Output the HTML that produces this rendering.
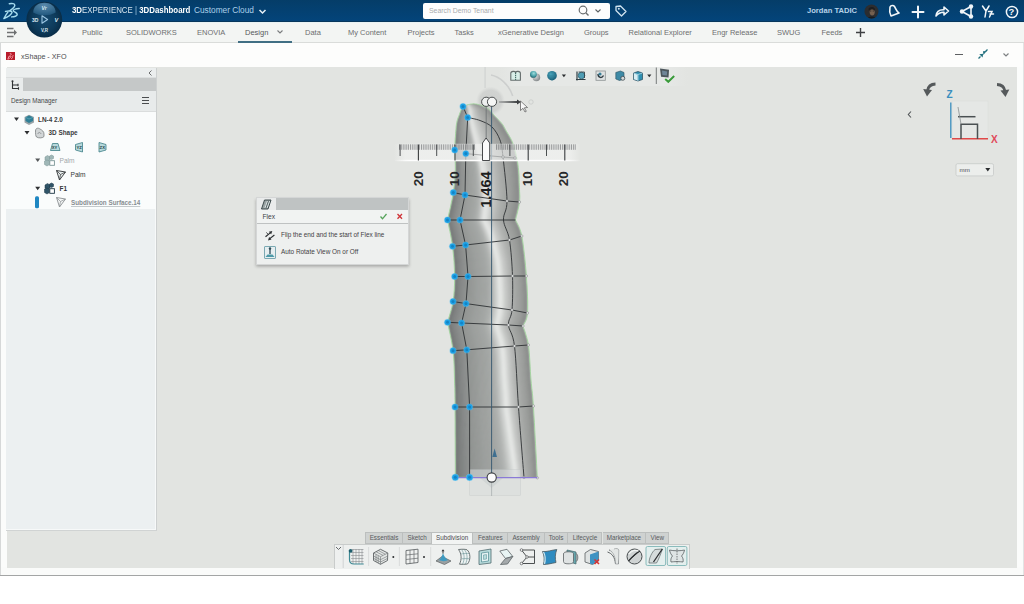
<!DOCTYPE html>
<html><head><meta charset="utf-8">
<style>
*{box-sizing:border-box;margin:0;padding:0}
html,body{width:1024px;height:604px;overflow:hidden;background:#fff;font-family:"Liberation Sans",sans-serif}
.a{position:absolute}
#top{left:0;top:0;width:1024px;height:22px;background:linear-gradient(#053d68,#03447a);border-bottom:1px solid #07375c}
#tabs{left:0;top:22px;width:1024px;height:21px;background:#f3f5f3;border-bottom:1px solid #dadcda;border-top:1px solid #e9f2f3}
.tab{position:absolute;top:27.5px;font-size:7.5px;color:#6d6f70;white-space:nowrap}
#title{left:1px;top:43px;width:1022px;height:24px;background:#fdfdfc}
#frameL{left:0;top:43px;width:1px;height:533px;background:#d6d8d8}
#frameR{left:1023px;top:43px;width:1px;height:533px;background:#e2e4e4}
#frameB{left:0;top:575px;width:1024px;height:1px;background:#a3a5a5}
#strip{left:1px;top:567px;width:1022px;height:8px;background:#fafbfa}
#view{left:7px;top:67px;width:1009.5px;height:501px;background:#e2e4e1}
#framebg{left:1px;top:43px;width:1022px;height:532px;background:#fbfcfb}
#panel{left:6px;top:68px;width:150.5px;height:462.5px;background:#ecf0f1;border-right:1px solid #cdd0d0;border-bottom:1px solid #d0d3d3;box-shadow:inset -1px -1px 0 #f7f9f9}
.tr{position:absolute;font-size:6.3px;color:#3a3c3d;white-space:nowrap}
</style></head><body>
<!-- top bar -->
<div id="top" class="a"></div>
<div id="tabs" class="a"></div>
<div id="framebg" class="a"></div>
<div id="title" class="a"></div>
<div id="frameL" class="a"></div>
<div id="frameR" class="a"></div>
<div id="frameB" class="a"></div>
<div id="strip" class="a"></div>
<div id="view" class="a"></div>
<div id="panel" class="a"></div>
<div class="a" style="left:498px;top:67px;width:190px;height:19px;background:linear-gradient(90deg,rgba(236,238,236,0),#e6e8e6 10%,#e6e8e6 88%,rgba(236,238,236,0))"></div>
<!-- top bar content -->
<svg class="a" style="left:2px;top:1px" width="20" height="20" viewBox="2 1 20 20">
 <g fill="none" stroke="#a6dbee" stroke-width="1.45" stroke-linecap="round" stroke-linejoin="round">
  <path d="M9.3 3.7 C12 3.2 14.8 3.5 14.8 5.2 C14.8 7 12.2 9 10 10.6"/>
  <path d="M5.5 11.4 C8 10.9 12.6 10.6 12 12.6 C11.2 14.8 7.6 17.2 3.9 18.5 C5.2 16 6.6 13.6 8.2 11.6"/>
  <path d="M19.2 8.5 C16.6 8.7 13.1 9.2 13.3 10.6 C13.5 11.9 17 12.7 17.2 14.3 C17.4 16 14.2 16.8 11.6 16.9"/>
 </g>
</svg>
<svg class="a" style="left:25px;top:0px" width="40" height="40" viewBox="0 0 40 40">
 <defs>
  <radialGradient id="cg" cx="50%" cy="50%" r="52%"><stop offset="0" stop-color="#164b70"/><stop offset="0.65" stop-color="#0d3a5a"/><stop offset="1" stop-color="#082b45"/></radialGradient>
  <radialGradient id="cap" cx="50%" cy="20%" r="75%"><stop offset="0" stop-color="#6c9fc2"/><stop offset="1" stop-color="#2a6289"/></radialGradient>
 </defs>
 <circle cx="19.3" cy="19.6" r="17.9" fill="url(#cg)"/>
 <path d="M8.2 12.5 C8.2 6 13.5 2.8 19.4 2.8 C25.3 2.8 30.6 6 30.6 12.5 C27 14.6 23 15.2 19.4 15.2 C15.8 15.2 11.8 14.6 8.2 12.5Z" fill="url(#cap)" opacity="0.8"/>
 <path d="M17 15.8 L17 23.2 L22.6 19.5Z" fill="none" stroke="#9cc6e2" stroke-width="1.1" stroke-linejoin="round"/>
 <text x="7" y="21.5" font-size="5" font-weight="bold" fill="#dce9f2" font-family="Liberation Sans">3D</text>
 <text x="29.5" y="22" font-size="5.5" font-style="italic" font-weight="bold" fill="#dce9f2" font-family="Liberation Sans">V</text>
 <text x="16" y="32" font-size="4.5" font-weight="bold" fill="#dce9f2" font-family="Liberation Sans">V,R</text>
 <text x="16.5" y="9.5" font-size="5" font-style="italic" font-weight="bold" fill="#dce9f2" font-family="Liberation Sans">Vr</text>
</svg>
<div class="a" style="left:72px;top:4.6px;font-size:9px;color:#fff;white-space:nowrap;transform:scaleX(0.874);transform-origin:0 0"><b>3D</b><span style="color:#d6e4ee">EXPERIENCE</span> <span style="color:#9cc4e0">|</span> <b>3DDashboard</b></div>
<div class="a" style="left:194px;top:5.4px;font-size:8.3px;color:#acd0ea;white-space:nowrap">Customer Cloud</div>
<svg class="a" style="left:258px;top:8px" width="9" height="7" viewBox="0 0 9 7"><path d="M1.5 2 L4.5 5 L7.5 2" fill="none" stroke="#e8f0f6" stroke-width="1.5"/></svg>
<div class="a" style="left:423px;top:3px;width:187px;height:16px;background:#fdfdfd;border-radius:2px"></div>
<div class="a" style="left:429px;top:6.5px;font-size:6.9px;color:#a8abad;white-space:nowrap">Search Demo Tenant</div>
<svg class="a" style="left:577px;top:4px" width="30" height="14" viewBox="0 0 30 14">
 <circle cx="6" cy="6" r="3.8" fill="none" stroke="#6a6e70" stroke-width="1.2"/><path d="M8.8 8.8 L11.5 11.5" stroke="#6a6e70" stroke-width="1.4"/>
 <path d="M18.5 5.5 L21 8 L23.5 5.5" fill="none" stroke="#5d6163" stroke-width="1.1"/>
</svg>
<svg class="a" style="left:614px;top:4px" width="14" height="14" viewBox="0 0 14 14"><path d="M2 2.5 L6.5 2 L12 7.5 L7.5 12 L2 6.5Z" fill="none" stroke="#cfe2ef" stroke-width="1.3" stroke-linejoin="round"/><circle cx="4.8" cy="4.8" r="1" fill="#cfe2ef"/></svg>
<div class="a" style="left:807px;top:6px;font-size:7.6px;font-weight:bold;color:#b6d2e8;white-space:nowrap">Jordan TADIC</div>
<svg class="a" style="left:863.5px;top:3.5px" width="15" height="15" viewBox="0 0 15 15"><defs><clipPath id="av"><circle cx="7.5" cy="7.5" r="7"/></clipPath></defs><circle cx="7.5" cy="7.5" r="7" fill="#2b2d30"/><g clip-path="url(#av)"><ellipse cx="8.2" cy="7.8" rx="2.6" ry="3.6" fill="#75604f"/><path d="M4.5 5 C5 2.5 10 2 11 5 L11 7 C10 5 6 5 5 7Z" fill="#1d1e20"/><path d="M3 15 C3.5 11.5 12 11.5 12.5 15Z" fill="#1a1b1d"/><path d="M5.8 7 H7.3 M8.7 7 H10.2" stroke="#1d1e20" stroke-width="0.7"/></g></svg>
<svg class="a" style="left:885px;top:1.5px" width="135" height="18" viewBox="0 0 135 18">
 <g fill="none" stroke="#f2f6f9" stroke-width="1.6" stroke-linejoin="round" stroke-linecap="round">
  <path d="M5 5 C4 10 5 12 6 14 L14 11 C11.5 9.5 11 7 9.5 4.5 C8.5 3 6 3 5 5Z"/>
  <path d="M33 4.5 L33 15.5 M27.5 10 L38.5 10" stroke-width="2"/>
  <path d="M51 14 C51.5 9.5 54.5 7.5 59 7.8 L59 5 L63.5 9 L59 13 L59 10.2 C55.5 10 53 11.5 51 14Z"/>
  <path d="M86 4.5 L77 9.5 L86 14.5 Z"/>
 </g>
 <g fill="#f2f6f9"><circle cx="86" cy="4.5" r="2.2"/><circle cx="77" cy="9.5" r="2.2"/><circle cx="86" cy="14.5" r="2.2"/></g>
 <g fill="none" stroke="#f2f6f9" stroke-width="1.5" stroke-linecap="round">
  <path d="M97.5 4 L101 9 L104 4 M101 9 L100 15 M103.5 9.5 L107 9.5 L104.5 15 M105 12 L108.5 12"/>
  <circle cx="127" cy="10" r="5.6"/>
 </g>
 <text x="123.6" y="13.4" font-size="9.5" font-weight="bold" fill="#f2f6f9" font-family="Liberation Sans">?</text>
</svg>

<!-- title bar -->
<div class="a" style="left:6.2px;top:51.7px;width:9px;height:8.2px;background:#b81c2b"></div>
<svg class="a" style="left:6.2px;top:51.7px" width="9" height="8.2" viewBox="0 0 9 8.2"><path d="M3.8 1.5 C5 1.3 5.8 1.8 4.8 3 L3.5 4 M2.5 4.5 C4 4.2 5 4.3 4.5 5.3 C4 6.3 3 6.8 1.8 7.2 L2.8 4.8 M7.6 3.8 C6.5 3.7 5.6 4.2 6.2 5 C6.8 5.6 6.6 6.5 5 6.8" fill="none" stroke="#f39aa2" stroke-width="1"/></svg>
<div class="a" style="left:21px;top:51.5px;font-size:7.2px;color:#4a4c4e;white-space:nowrap">xShape - XFO</div>
<div class="a" style="left:955px;top:53.5px;width:8px;height:1.5px;background:#5d5f61"></div>
<svg class="a" style="left:976px;top:48px" width="14" height="13" viewBox="976 48 14 13"><g stroke="#23707e" stroke-width="1.3"><path d="M978.5 58.5 L980.5 56.5"/><path d="M987.5 49.5 L985.5 51.5"/></g><path d="M979.3 54.3 L983.2 53.7 L982.6 57.6Z" fill="#23707e"/><path d="M986.7 50.9 L983 51.3 L983.4 55Z" fill="#23707e"/></svg>
<svg class="a" style="left:1002px;top:52px" width="8" height="6" viewBox="0 0 8 6"><path d="M1.5 1.5 L4 4 L6.5 1.5" fill="none" stroke="#7d8082" stroke-width="1.2"/></svg>
<!-- panel -->
<div class="a" style="left:6px;top:68px;width:150px;height:10px;background:#ebeeee;border-bottom:1px solid #dcdfdf"></div>
<svg class="a" style="left:147px;top:69px" width="7" height="8" viewBox="0 0 7 8"><path d="M4.5 1.5 L2 4 L4.5 6.5" fill="none" stroke="#6d6f70" stroke-width="1"/></svg>
<div class="a" style="left:6px;top:78px;width:150px;height:13px;background:#c5c8c8"></div>
<div class="a" style="left:6px;top:78px;width:17px;height:13px;background:#e9ecec"></div>
<svg class="a" style="left:10px;top:80px" width="11" height="10" viewBox="0 0 11 10"><g fill="none" stroke="#2f3133" stroke-width="1.1"><path d="M2.5 1.5 V8.5 H8.5 M2.5 5 H8"/><path d="M8 3.8 V6.2 M8.5 7.3 V9.7"/></g><circle cx="2.5" cy="1.3" r="1" fill="#2f3133"/></svg>
<div class="a" style="left:6px;top:91px;width:150px;height:21px;background:#e8ebeb;border-bottom:1px solid #dadddd"></div>
<div class="a" style="left:11px;top:97px;font-size:6.3px;color:#45474a;white-space:nowrap">Design Manager</div>
<svg class="a" style="left:141px;top:96px" width="9" height="9" viewBox="0 0 9 9"><path d="M1 1.5 H8 M1 4.5 H8 M1 7.5 H8" stroke="#4a4c4e" stroke-width="1"/></svg>
<div class="a" style="left:6px;top:112px;width:149.5px;height:96.5px;background:#fafcfc"></div>

<!-- tree -->
<svg class="a" style="left:6px;top:112px" width="150" height="98" viewBox="6 112 150 98">
 <g fill="#2d2f31">
  <path d="M14 117.5 L19 117.5 L16.5 121Z"/>
  <path d="M24.5 131 L29.5 131 L27 134.5Z"/>
  <path d="M35.2 158.5 L40.2 158.5 L37.7 162Z" fill="#55585a"/>
  <path d="M35.2 186.7 L40.2 186.7 L37.7 190.2Z"/>
 </g>
 <!-- cube LN-4 -->
 <path d="M24.5 117 L29 114.8 L34 117 L34 122.5 L29 125 L24.5 122.5Z" fill="#9aa4a8"/>
 <path d="M25.5 117.3 L29 115.6 L33 117.3 L33 121 L29 123 L25.5 121Z" fill="#2f7f95"/>
 <path d="M25.5 117.3 L29 119 L33 117.3" fill="none" stroke="#6fb4c6" stroke-width="0.6"/>
 <!-- 3D shape icon -->
 <path d="M35.5 131 C35.5 128 38 127.5 40 129 C42 130 44 131.5 44 134 L44 136.5 C43 138 39 138.5 36.5 137 C35.5 136 35.5 133 35.5 131Z" fill="#d2d6d7" stroke="#6d7173" stroke-width="0.7"/>
 <path d="M38 134 C38 132 40.5 132 41 134" fill="none" stroke="#6d7173" stroke-width="0.6"/>
 <!-- planes -->
 <path d="M50.5 150.5 L52.5 143.5 L58 143.5 L60 150.5Z" fill="#b7d9dc" stroke="#3d7f87" stroke-width="0.8"/>
 <text x="51.8" y="149" font-size="4.2" font-weight="bold" fill="#1e3f44" font-family="Liberation Sans">XY</text>
 <path d="M75.5 144.5 L82.5 142.5 L82.5 152 L75.5 150Z" fill="#b7d9dc" stroke="#3d7f87" stroke-width="0.8"/>
 <text x="76.5" y="149" font-size="4.2" font-weight="bold" fill="#1e3f44" font-family="Liberation Sans">YZ</text>
 <path d="M99 142.5 L106 144.5 L106 150 L99 152Z" fill="#b7d9dc" stroke="#3d7f87" stroke-width="0.8"/>
 <text x="99.6" y="149" font-size="4.2" font-weight="bold" fill="#1e3f44" font-family="Liberation Sans">ZX</text>
 <!-- Palm geometrical set (greyed) -->
 <g fill="#9fb7b7" stroke="#7a9595" stroke-width="0.5">
  <path d="M45 157.0 L47.5 155.5 L50 157.0 L50 160.0 L47.5 161.5 L45 160.0Z"/>
  <path d="M49.5 156.0 L51.5 155.0 L53.5 156.0 L53.5 158.5 L51.5 159.5 L49.5 158.5Z"/>
  <path d="M44.5 161.0 L47 160.0 L49.5 161.0 L49.5 164.5 L47 166.0 L44.5 164.5Z"/>
 </g>
 <rect x="49.8" y="160.7" width="4.6" height="4.6" fill="#ffffff" stroke="#7a9595" stroke-width="0.9"/>
  <!-- palm surface icon -->
 <g fill="#e6ecec" stroke="#2f3234" stroke-width="0.9" stroke-linejoin="round"><path d="M56.5 170.5 L65.5 172 L59.5 180 Z"/></g><g fill="none" stroke="#2f3234" stroke-width="0.7"><path d="M56.5 170.5 L60.5 174.5 L65.5 172 M60.5 174.5 L59.5 180"/></g>
 <!-- F1 set -->
 <g fill="#2f5468" stroke="#1d3644" stroke-width="0.5">
  <path d="M45 185.0 L47.5 183.5 L50 185.0 L50 188.0 L47.5 189.5 L45 188.0Z"/>
  <path d="M49.5 184.0 L51.5 183.0 L53.5 184.0 L53.5 186.5 L51.5 187.5 L49.5 186.5Z"/>
  <path d="M44.5 189.0 L47 188.0 L49.5 189.0 L49.5 192.5 L47 194.0 L44.5 192.5Z"/>
 </g>
 <rect x="49.8" y="188.7" width="4.6" height="4.6" fill="#ffffff" stroke="#1d3644" stroke-width="0.9"/>
  <!-- subdivision surface icon -->
 <g fill="#f4f6f6" stroke="#8a8f92" stroke-width="0.9" stroke-linejoin="round"><path d="M56.5 197.5 L65.5 199 L59.5 207 Z"/></g><g fill="none" stroke="#8a8f92" stroke-width="0.7"><path d="M56.5 197.5 L60.5 201.5 L65.5 199 M60.5 201.5 L59.5 207"/></g>
 <rect x="35" y="196.3" width="4" height="12" rx="1.5" fill="#1f87c2"/>
</svg>
<div class="tr" style="left:38px;top:115.5px;font-size:6.4px;font-weight:bold;color:#3b3d3f">LN-4 2.0</div>
<div class="tr" style="left:48.5px;top:129px;font-size:6.4px;font-weight:bold;color:#3b3d3f">3D Shape</div>
<div class="tr" style="left:59.5px;top:156.5px;font-size:6.6px;color:#a3a7aa">Palm</div>
<div class="tr" style="left:70.5px;top:170.5px;font-size:6.6px;color:#333537">Palm</div>
<div class="tr" style="left:59.5px;top:184.5px;font-size:6.4px;font-weight:bold;color:#333537">F1</div>
<div class="tr" style="left:71px;top:198.6px;font-size:6.3px;font-weight:bold;color:#878d91;text-decoration:underline;text-decoration-color:#c3c9cb">Subdivision Surface.14</div>
<!-- flex dialog -->
<div class="a" style="left:256px;top:197px;width:153px;height:68px;background:#eef0ef;box-shadow:0 1.5px 3px rgba(0,0,0,0.28);border:1px solid #d4d6d6"></div>
<div class="a" style="left:257px;top:198px;width:151px;height:12px;background:#bfc3c3"></div>
<div class="a" style="left:257px;top:198px;width:19px;height:12px;background:#e9ebeb"></div>
<svg class="a" style="left:259px;top:199px" width="14" height="11" viewBox="0 0 14 11"><path d="M2.5 10 L5.5 1 L12 1 L9 10Z" fill="#9aa4a4" stroke="#2f3d3f" stroke-width="0.9" stroke-linejoin="round"/><path d="M6 9 L8.5 2 M8 9 L10.5 2" stroke="#e4ecec" stroke-width="0.9"/><path d="M7 9 L9.5 2" stroke="#2f3d3f" stroke-width="0.6"/></svg>
<div class="a" style="left:257px;top:210px;width:151px;height:13.5px;background:#f1f3f2;border-bottom:1px solid #bfc2c2"></div>
<div class="a" style="left:262.5px;top:212.5px;font-size:6.6px;color:#3b3d3f;white-space:nowrap">Flex</div>
<svg class="a" style="left:378px;top:212px" width="28" height="9" viewBox="0 0 28 9"><path d="M2.5 4.5 L4.5 6.8 L8.5 2" fill="none" stroke="#55a35a" stroke-width="1.3"/><path d="M19.5 2 L24 6.8 M24 2 L19.5 6.8" stroke="#d0353a" stroke-width="1.3"/></svg>
<svg class="a" style="left:263px;top:229px" width="14" height="13" viewBox="0 0 14 13"><g fill="none" stroke="#2b2e30" stroke-width="1.2"><path d="M2.5 7.8 L7.6 3.6"/><path d="M11.4 6 L6.8 9.6"/></g><path d="M9.3 1.9 L5.8 2.8 L8.2 5.3Z M5 11.4 L8.5 10.5 L6.1 8Z" fill="#2b2e30"/><path d="M3.3 3.5 L5 5.2" stroke="#2b2e30" stroke-width="0.9"/></svg>
<div class="a" style="left:281px;top:230.5px;font-size:6.4px;color:#3f4143;white-space:nowrap">Flip the end and the start of Flex line</div>
<div class="a" style="left:264px;top:246px;width:12px;height:13px;border:1px solid #7ba9b2;border-radius:1px;background:#e6eef0"></div>
<svg class="a" style="left:264px;top:246px" width="12" height="13" viewBox="0 0 12 13"><path d="M6 2 L6 8" stroke="#2b4a55" stroke-width="1.3"/><circle cx="6" cy="2.5" r="1.2" fill="#2b4a55"/><path d="M1.5 11 L3.5 8.5 L8.5 8.5 L10.5 11Z" fill="#4d9aa8"/></svg>
<div class="a" style="left:281px;top:248px;font-size:6.4px;color:#3f4143;white-space:nowrap">Auto Rotate View On or Off</div>
<!--MODEL-->
<svg class="a" style="left:380px;top:60px" width="220" height="450" viewBox="380 60 220 450">
 <defs>
  <clipPath id="mclip"><path d="M462.6 106.6 L462.4 107.0 L462.2 107.5 L462.0 108.0 L461.7 108.7 L461.4 109.4 L461.0 110.2 L460.7 111.1 L460.3 112.0 L459.9 113.0 L459.5 114.2 L459.0 115.4 L458.5 116.7 L458.0 118.0 L457.5 119.4 L457.1 120.9 L456.8 122.3 L456.5 123.8 L456.3 125.3 L456.1 126.8 L456.0 128.4 L455.9 130.0 L455.7 131.6 L455.6 133.3 L455.5 135.0 L455.4 136.7 L455.2 138.5 L455.1 140.2 L455.0 142.0 L454.9 143.9 L454.8 145.8 L454.7 147.9 L454.7 150.0 L454.7 152.2 L454.8 154.6 L454.9 157.0 L455.1 159.5 L455.2 162.1 L455.3 164.7 L455.3 167.3 L455.3 170.0 L455.2 172.7 L455.1 175.3 L454.9 178.0 L454.7 180.8 L454.4 183.6 L454.1 186.5 L453.7 189.4 L453.3 192.5 L452.7 195.9 L452.0 199.7 L451.1 203.7 L450.3 207.7 L449.4 211.5 L448.6 214.9 L448.0 217.8 L447.5 220.0 L447.9 222.0 L448.5 224.6 L449.1 227.8 L449.9 231.3 L450.6 235.0 L451.3 238.8 L452.0 242.6 L452.5 246.3 L452.9 249.9 L453.3 253.7 L453.7 257.6 L454.0 261.5 L454.2 265.4 L454.4 269.2 L454.5 272.9 L454.6 276.5 L454.6 279.9 L454.6 283.2 L454.4 286.4 L454.3 289.6 L454.0 292.7 L453.8 295.7 L453.4 298.6 L453.0 301.5 L452.5 304.4 L451.8 307.5 L451.0 310.5 L450.1 313.5 L449.3 316.2 L448.6 318.7 L448.0 320.7 L447.5 322.3 L448.0 324.5 L448.6 327.4 L449.3 330.8 L450.2 334.7 L451.0 338.7 L451.8 342.9 L452.5 346.9 L453.0 350.7 L453.4 354.3 L453.7 358.0 L453.9 361.7 L454.1 365.4 L454.2 369.1 L454.3 372.8 L454.4 376.4 L454.5 380.0 L454.6 383.2 L454.7 385.9 L454.8 388.4 L454.8 390.9 L454.9 393.8 L454.9 397.3 L455.0 401.6 L455.0 407.0 L455.0 414.2 L455.1 423.2 L455.1 433.3 L455.2 443.8 L455.2 454.2 L455.3 463.7 L455.3 471.6 L455.3 477.3 L537.3 477.5 L537.0 471.7 L536.6 463.6 L536.1 453.9 L535.5 443.4 L534.9 432.6 L534.4 422.4 L533.8 413.2 L533.4 406.0 L533.0 400.6 L532.7 396.5 L532.4 393.3 L532.1 390.7 L531.8 388.4 L531.6 386.1 L531.3 383.4 L531.0 380.0 L530.7 375.9 L530.4 371.5 L530.2 366.8 L529.9 362.1 L529.6 357.3 L529.3 352.8 L528.9 348.7 L528.4 345.0 L527.8 341.7 L527.1 338.7 L526.3 335.9 L525.5 333.3 L524.8 331.0 L524.0 329.0 L523.4 327.4 L523.0 326.0 L523.4 325.2 L523.9 324.2 L524.6 323.1 L525.3 321.8 L526.0 320.2 L526.7 318.2 L527.2 315.9 L527.5 313.0 L527.7 309.5 L527.7 305.5 L527.7 301.0 L527.5 296.2 L527.3 291.1 L527.1 286.0 L526.7 280.9 L526.4 276.0 L526.0 271.0 L525.5 265.6 L525.0 260.2 L524.4 254.7 L523.8 249.4 L523.2 244.4 L522.5 239.9 L521.8 236.0 L521.1 232.7 L520.2 229.9 L519.3 227.5 L518.4 225.5 L517.5 223.8 L516.7 222.3 L516.0 221.1 L515.5 220.0 L515.8 218.6 L516.3 216.7 L516.9 214.5 L517.5 212.1 L518.1 209.5 L518.7 206.9 L519.2 204.3 L519.5 202.0 L519.7 199.8 L519.8 197.8 L519.8 195.7 L519.7 193.6 L519.6 191.6 L519.5 189.4 L519.4 187.3 L519.3 185.0 L519.2 182.7 L519.1 180.2 L519.1 177.8 L519.0 175.3 L518.8 172.7 L518.6 170.2 L518.3 167.6 L518.0 165.0 L517.6 162.3 L517.1 159.6 L516.5 156.8 L515.9 153.9 L515.2 151.2 L514.5 148.5 L513.7 146.0 L513.0 143.7 L512.2 141.6 L511.3 139.7 L510.4 137.9 L509.4 136.2 L508.5 134.6 L507.6 133.2 L506.7 131.8 L506.0 130.5 L505.4 129.4 L504.9 128.4 L504.4 127.5 L504.0 126.8 L503.6 126.1 L503.2 125.3 L502.7 124.6 L502.0 123.7 L501.2 122.7 L500.3 121.7 L499.3 120.7 L498.3 119.6 L497.3 118.5 L496.3 117.5 L495.3 116.5 L494.4 115.5 L493.6 114.6 L492.8 113.6 L492.1 112.7 L491.3 111.8 L490.6 110.9 L489.9 110.1 L489.1 109.4 L488.3 108.7 L487.4 108.1 L486.6 107.6 L485.6 107.1 L484.7 106.7 L483.8 106.3 L482.8 105.9 L481.9 105.6 L481.0 105.3 L480.1 105.0 L479.2 104.7 L478.3 104.5 L477.4 104.3 L476.5 104.1 L475.7 104.0 L474.8 103.9 L474.0 103.8 L473.2 103.8 L472.3 103.9 L471.4 104.0 L470.6 104.1 L469.8 104.3 L469.1 104.4 L468.5 104.5 L468.0 104.6Z"/></clipPath>
  <filter id="bl" x="-5%" y="-5%" width="110%" height="110%"><feGaussianBlur stdDeviation="0.8"/></filter>
  <radialGradient id="halo" cx="50%" cy="50%" r="50%"><stop offset="0" stop-color="#cdcfcd" stop-opacity="1"/><stop offset="0.75" stop-color="#d0d2d0" stop-opacity="0.95"/><stop offset="1" stop-color="#d6d8d6" stop-opacity="0"/></radialGradient>
 </defs>
 <!-- manipulator arcs / halo -->
 <circle cx="490.5" cy="101" r="14.5" fill="url(#halo)"/>
 <path d="M491 75 C499 76.5 509 84 512.7 96" fill="none" stroke="#cdcfce" stroke-width="1.6"/>
 <path d="M485.1 67 V88" stroke="#d3d5d4" stroke-width="1.4"/>
 <g clip-path="url(#mclip)"><g filter="url(#bl)"><path d="M462.6 100 462.6 105 461.1 110 459.1 115 457.4 120 456.3 125 455.9 130 455.5 135 455.1 140 454.8 145 454.7 150 454.8 155 455.1 160 455.3 165 455.3 170 455.1 175 454.8 180 454.3 185 453.7 190 452.9 195 451.9 200 450.9 205 449.7 210 448.6 215 447.5 220 448.5 225 449.6 230 450.6 235 451.5 240 452.3 245 452.9 250 453.4 255 453.8 260 454.2 265 454.4 270 454.6 275 454.6 280 454.5 285 454.2 290 453.8 295 453.2 300 452.3 305 451.1 310 449.7 315 448.2 320 448.1 325 449.2 330 450.2 335 451.2 340 452.1 345 452.9 350 453.4 355 453.8 360 454.0 365 454.2 370 454.3 375 454.5 380 454.7 385 454.8 390 454.9 395 454.9 400 455.0 405 455.0 410 455.1 415 455.1 420 455.1 425 455.1 430 455.1 435 455.2 440 455.2 445 455.2 450 455.2 455 455.2 460 455.3 465 455.3 470 455.3 475 455.3 480 458.1 480 458.1 475 458.0 470 458.0 465 457.9 460 457.9 455 457.8 450 457.8 445 457.7 440 457.7 435 457.6 430 457.6 425 457.5 420 457.5 415 457.4 410 457.4 405 457.3 400 457.2 395 457.1 390 457.0 385 456.8 380 456.7 375 456.5 370 456.3 365 456.1 360 455.7 355 455.2 350 454.4 345 453.5 340 452.5 335 451.4 330 450.3 325 450.5 320 452.0 315 453.4 310 454.6 305 455.4 300 456.0 295 456.4 290 456.6 285 456.7 280 456.6 275 456.5 270 456.2 265 455.9 260 455.4 255 454.9 250 454.2 245 453.4 240 452.5 235 451.4 230 450.3 225 449.2 220 450.3 215 451.4 210 452.5 205 453.5 200 454.4 195 455.1 190 455.7 185 456.1 180 456.4 175 456.6 170 456.5 165 456.3 160 456.0 155 455.8 150 455.8 145 456.1 140 456.4 135 456.6 130 457.1 125 458.0 120 459.6 115 461.5 110 462.8 105 462.7 100Z" fill="rgb(113, 116, 115)" stroke="rgb(113, 116, 115)" stroke-width="0.6"/><path d="M462.7 100 462.8 105 461.5 110 459.6 115 458.0 120 457.1 125 456.6 130 456.4 135 456.1 140 455.8 145 455.8 150 456.0 155 456.3 160 456.5 165 456.6 170 456.4 175 456.1 180 455.7 185 455.1 190 454.4 195 453.5 200 452.5 205 451.4 210 450.3 215 449.2 220 450.3 225 451.4 230 452.5 235 453.4 240 454.2 245 454.9 250 455.4 255 455.9 260 456.2 265 456.5 270 456.6 275 456.7 280 456.6 285 456.4 290 456.0 295 455.4 300 454.6 305 453.4 310 452.0 315 450.5 320 450.3 325 451.4 330 452.5 335 453.5 340 454.4 345 455.2 350 455.7 355 456.1 360 456.3 365 456.5 370 456.7 375 456.8 380 457.0 385 457.1 390 457.2 395 457.3 400 457.4 405 457.4 410 457.5 415 457.5 420 457.6 425 457.6 430 457.7 435 457.7 440 457.8 445 457.8 450 457.9 455 457.9 460 458.0 465 458.0 470 458.1 475 458.1 480 460.9 480 460.9 475 460.8 470 460.7 465 460.7 460 460.6 455 460.5 450 460.4 445 460.3 440 460.2 435 460.2 430 460.1 425 460.0 420 459.9 415 459.8 410 459.7 405 459.7 400 459.6 395 459.5 390 459.3 385 459.1 380 459.0 375 458.8 370 458.7 365 458.4 360 458.0 355 457.5 350 456.8 345 455.8 340 454.8 335 453.7 330 452.6 325 452.8 320 454.3 315 455.6 310 456.8 305 457.6 300 458.1 295 458.5 290 458.7 285 458.8 280 458.7 275 458.5 270 458.3 265 457.9 260 457.4 255 456.8 250 456.2 245 455.3 240 454.3 235 453.2 230 452.1 225 450.9 220 451.9 215 453.0 210 454.1 205 455.0 200 455.9 195 456.6 190 457.1 185 457.5 180 457.7 175 457.8 170 457.7 165 457.4 160 457.1 155 456.9 150 456.9 145 457.0 140 457.2 135 457.4 130 457.8 125 458.6 120 460.1 115 461.9 110 463.1 105 462.7 100Z" fill="rgb(121, 124, 123)" stroke="rgb(121, 124, 123)" stroke-width="0.6"/><path d="M462.7 100 463.1 105 461.9 110 460.1 115 458.6 120 457.8 125 457.4 130 457.2 135 457.0 140 456.9 145 456.9 150 457.1 155 457.4 160 457.7 165 457.8 170 457.7 175 457.5 180 457.1 185 456.6 190 455.9 195 455.0 200 454.1 205 453.0 210 451.9 215 450.9 220 452.1 225 453.2 230 454.3 235 455.3 240 456.2 245 456.8 250 457.4 255 457.9 260 458.3 265 458.5 270 458.7 275 458.8 280 458.7 285 458.5 290 458.1 295 457.6 300 456.8 305 455.6 310 454.3 315 452.8 320 452.6 325 453.7 330 454.8 335 455.8 340 456.8 345 457.5 350 458.0 355 458.4 360 458.7 365 458.8 370 459.0 375 459.1 380 459.3 385 459.5 390 459.6 395 459.7 400 459.7 405 459.8 410 459.9 415 460.0 420 460.1 425 460.2 430 460.2 435 460.3 440 460.4 445 460.5 450 460.6 455 460.7 460 460.7 465 460.8 470 460.9 475 460.9 480 463.7 480 463.6 475 463.6 470 463.5 465 463.4 460 463.3 455 463.1 450 463.0 445 462.9 440 462.8 435 462.7 430 462.5 425 462.4 420 462.3 415 462.2 410 462.1 405 462.0 400 462.0 395 461.8 390 461.7 385 461.5 380 461.3 375 461.1 370 461.0 365 460.7 360 460.4 355 459.8 350 459.1 345 458.1 340 457.1 335 455.9 330 454.8 325 455.1 320 456.6 315 457.9 310 459.0 305 459.8 300 460.3 295 460.6 290 460.8 285 460.9 280 460.8 275 460.6 270 460.3 265 459.9 260 459.4 255 458.8 250 458.1 245 457.2 240 456.2 235 455.1 230 453.8 225 452.6 220 453.6 215 454.6 210 455.6 205 456.6 200 457.4 195 458.0 190 458.5 185 458.8 180 459.0 175 459.1 170 459.0 165 458.6 160 458.2 155 457.9 150 457.9 145 458.0 140 458.1 135 458.2 130 458.5 125 459.2 120 460.6 115 462.3 110 463.3 105 462.8 100Z" fill="rgb(127, 130, 129)" stroke="rgb(127, 130, 129)" stroke-width="0.6"/><path d="M462.8 100 463.3 105 462.3 110 460.6 115 459.2 120 458.5 125 458.2 130 458.1 135 458.0 140 457.9 145 457.9 150 458.2 155 458.6 160 459.0 165 459.1 170 459.0 175 458.8 180 458.5 185 458.0 190 457.4 195 456.6 200 455.6 205 454.6 210 453.6 215 452.6 220 453.8 225 455.1 230 456.2 235 457.2 240 458.1 245 458.8 250 459.4 255 459.9 260 460.3 265 460.6 270 460.8 275 460.9 280 460.8 285 460.6 290 460.3 295 459.8 300 459.0 305 457.9 310 456.6 315 455.1 320 454.8 325 455.9 330 457.1 335 458.1 340 459.1 345 459.8 350 460.4 355 460.7 360 461.0 365 461.1 370 461.3 375 461.5 380 461.7 385 461.8 390 462.0 395 462.0 400 462.1 405 462.2 410 462.3 415 462.4 420 462.5 425 462.7 430 462.8 435 462.9 440 463.0 445 463.1 450 463.3 455 463.4 460 463.5 465 463.6 470 463.6 475 463.7 480 466.5 480 466.4 475 466.4 470 466.2 465 466.1 460 465.9 455 465.8 450 465.6 445 465.5 440 465.3 435 465.2 430 465.0 425 464.9 420 464.7 415 464.6 410 464.5 405 464.4 400 464.3 395 464.2 390 464.0 385 463.8 380 463.6 375 463.4 370 463.3 365 463.0 360 462.7 355 462.1 350 461.4 345 460.4 340 459.3 335 458.2 330 457.1 325 457.4 320 458.9 315 460.2 310 461.2 305 461.9 300 462.4 295 462.7 290 462.9 285 462.9 280 462.8 275 462.6 270 462.3 265 462.0 260 461.4 255 460.8 250 460.0 245 459.1 240 458.1 235 456.9 230 455.6 225 454.2 220 455.3 215 456.3 210 457.2 205 458.1 200 458.9 195 459.5 190 459.9 185 460.1 180 460.3 175 460.3 170 460.2 165 459.8 160 459.3 155 459.0 150 458.9 145 458.9 140 459.0 135 459.0 130 459.2 125 459.8 120 461.1 115 462.7 110 463.6 105 462.9 100Z" fill="rgb(132, 135, 134)" stroke="rgb(132, 135, 134)" stroke-width="0.6"/><path d="M462.9 100 463.6 105 462.7 110 461.1 115 459.8 120 459.2 125 459.0 130 459.0 135 458.9 140 458.9 145 459.0 150 459.3 155 459.8 160 460.2 165 460.3 170 460.3 175 460.1 180 459.9 185 459.5 190 458.9 195 458.1 200 457.2 205 456.3 210 455.3 215 454.2 220 455.6 225 456.9 230 458.1 235 459.1 240 460.0 245 460.8 250 461.4 255 462.0 260 462.3 265 462.6 270 462.8 275 462.9 280 462.9 285 462.7 290 462.4 295 461.9 300 461.2 305 460.2 310 458.9 315 457.4 320 457.1 325 458.2 330 459.3 335 460.4 340 461.4 345 462.1 350 462.7 355 463.0 360 463.3 365 463.4 370 463.6 375 463.8 380 464.0 385 464.2 390 464.3 395 464.4 400 464.5 405 464.6 410 464.7 415 464.9 420 465.0 425 465.2 430 465.3 435 465.5 440 465.6 445 465.8 450 465.9 455 466.1 460 466.2 465 466.4 470 466.4 475 466.5 480 469.2 480 469.2 475 469.2 470 469.0 465 468.8 460 468.6 455 468.4 450 468.2 445 468.1 440 467.9 435 467.7 430 467.5 425 467.3 420 467.1 415 466.9 410 466.9 405 466.8 400 466.7 395 466.5 390 466.3 385 466.1 380 465.9 375 465.8 370 465.6 365 465.3 360 465.0 355 464.4 350 463.7 345 462.7 340 461.6 335 460.4 330 459.3 325 459.7 320 461.2 315 462.4 310 463.4 305 464.1 300 464.6 295 464.9 290 465.0 285 465.0 280 464.9 275 464.7 270 464.4 265 464.0 260 463.4 255 462.7 250 461.9 245 461.0 240 459.9 235 458.7 230 457.3 225 455.9 220 456.9 215 457.9 210 458.8 205 459.7 200 460.4 195 460.9 190 461.3 185 461.5 180 461.6 175 461.6 170 461.4 165 461.0 160 460.5 155 460.1 150 459.9 145 459.9 140 459.8 135 459.8 130 459.9 125 460.4 120 461.6 115 463.1 110 463.8 105 463.0 100Z" fill="rgb(137, 140, 139)" stroke="rgb(137, 140, 139)" stroke-width="0.6"/><path d="M463.0 100 463.8 105 463.1 110 461.6 115 460.4 120 459.9 125 459.8 130 459.8 135 459.9 140 459.9 145 460.1 150 460.5 155 461.0 160 461.4 165 461.6 170 461.6 175 461.5 180 461.3 185 460.9 190 460.4 195 459.7 200 458.8 205 457.9 210 456.9 215 455.9 220 457.3 225 458.7 230 459.9 235 461.0 240 461.9 245 462.7 250 463.4 255 464.0 260 464.4 265 464.7 270 464.9 275 465.0 280 465.0 285 464.9 290 464.6 295 464.1 300 463.4 305 462.4 310 461.2 315 459.7 320 459.3 325 460.4 330 461.6 335 462.7 340 463.7 345 464.4 350 465.0 355 465.3 360 465.6 365 465.8 370 465.9 375 466.1 380 466.3 385 466.5 390 466.7 395 466.8 400 466.9 405 466.9 410 467.1 415 467.3 420 467.5 425 467.7 430 467.9 435 468.1 440 468.2 445 468.4 450 468.6 455 468.8 460 469.0 465 469.2 470 469.2 475 469.2 480 472.0 480 472.0 475 471.9 470 471.7 465 471.5 460 471.3 455 471.1 450 470.9 445 470.6 440 470.4 435 470.2 430 470.0 425 469.8 420 469.6 415 469.3 410 469.2 405 469.1 400 469.0 395 468.9 390 468.6 385 468.4 380 468.2 375 468.1 370 467.9 365 467.6 360 467.3 355 466.7 350 466.0 345 465.0 340 463.9 335 462.7 330 461.6 325 462.1 320 463.5 315 464.7 310 465.6 305 466.3 300 466.7 295 467.0 290 467.1 285 467.1 280 467.0 275 466.7 270 466.4 265 466.0 260 465.4 255 464.7 250 463.9 245 462.9 240 461.8 235 460.5 230 459.1 225 457.6 220 458.6 215 459.5 210 460.4 205 461.3 200 461.9 195 462.3 190 462.7 185 462.8 180 462.9 175 462.9 170 462.6 165 462.1 160 461.6 155 461.2 150 460.9 145 460.8 140 460.7 135 460.6 130 460.6 125 461.1 120 462.1 115 463.5 110 464.0 105 463.0 100Z" fill="rgb(141, 144, 142)" stroke="rgb(141, 144, 142)" stroke-width="0.6"/><path d="M463.0 100 464.0 105 463.5 110 462.1 115 461.1 120 460.6 125 460.6 130 460.7 135 460.8 140 460.9 145 461.2 150 461.6 155 462.1 160 462.6 165 462.9 170 462.9 175 462.8 180 462.7 185 462.3 190 461.9 195 461.3 200 460.4 205 459.5 210 458.6 215 457.6 220 459.1 225 460.5 230 461.8 235 462.9 240 463.9 245 464.7 250 465.4 255 466.0 260 466.4 265 466.7 270 467.0 275 467.1 280 467.1 285 467.0 290 466.7 295 466.3 300 465.6 305 464.7 310 463.5 315 462.1 320 461.6 325 462.7 330 463.9 335 465.0 340 466.0 345 466.7 350 467.3 355 467.6 360 467.9 365 468.1 370 468.2 375 468.4 380 468.6 385 468.9 390 469.0 395 469.1 400 469.2 405 469.3 410 469.6 415 469.8 420 470.0 425 470.2 430 470.4 435 470.6 440 470.9 445 471.1 450 471.3 455 471.5 460 471.7 465 471.9 470 472.0 475 472.0 480 474.8 480 474.8 475 474.7 470 474.5 465 474.2 460 474.0 455 473.7 450 473.5 445 473.2 440 473.0 435 472.7 430 472.5 425 472.2 420 472.0 415 471.7 410 471.6 405 471.5 400 471.4 395 471.2 390 471.0 385 470.7 380 470.5 375 470.4 370 470.2 365 469.9 360 469.6 355 469.1 350 468.3 345 467.3 340 466.2 335 464.9 330 463.8 325 464.4 320 465.8 315 466.9 310 467.9 305 468.5 300 468.9 295 469.1 290 469.2 285 469.2 280 469.0 275 468.8 270 468.5 265 468.0 260 467.4 255 466.6 250 465.8 245 464.8 240 463.6 235 462.3 230 460.9 225 459.3 220 460.2 215 461.2 210 462.0 205 462.8 200 463.4 195 463.8 190 464.0 185 464.2 180 464.2 175 464.1 170 463.8 165 463.3 160 462.7 155 462.2 150 461.9 145 461.8 140 461.6 135 461.4 130 461.3 125 461.7 120 462.6 115 463.9 110 464.3 105 463.1 100Z" fill="rgb(145, 148, 146)" stroke="rgb(145, 148, 146)" stroke-width="0.6"/><path d="M463.1 100 464.3 105 463.9 110 462.6 115 461.7 120 461.3 125 461.4 130 461.6 135 461.8 140 461.9 145 462.2 150 462.7 155 463.3 160 463.8 165 464.1 170 464.2 175 464.2 180 464.0 185 463.8 190 463.4 195 462.8 200 462.0 205 461.2 210 460.2 215 459.3 220 460.9 225 462.3 230 463.6 235 464.8 240 465.8 245 466.6 250 467.4 255 468.0 260 468.5 265 468.8 270 469.0 275 469.2 280 469.2 285 469.1 290 468.9 295 468.5 300 467.9 305 466.9 310 465.8 315 464.4 320 463.8 325 464.9 330 466.2 335 467.3 340 468.3 345 469.1 350 469.6 355 469.9 360 470.2 365 470.4 370 470.5 375 470.7 380 471.0 385 471.2 390 471.4 395 471.5 400 471.6 405 471.7 410 472.0 415 472.2 420 472.5 425 472.7 430 473.0 435 473.2 440 473.5 445 473.7 450 474.0 455 474.2 460 474.5 465 474.7 470 474.8 475 474.8 480 477.6 480 477.6 475 477.5 470 477.2 465 476.9 460 476.6 455 476.4 450 476.1 445 475.8 440 475.5 435 475.2 430 475.0 425 474.7 420 474.4 415 474.1 410 474.0 405 473.9 400 473.7 395 473.5 390 473.3 385 473.1 380 472.9 375 472.7 370 472.5 365 472.2 360 471.9 355 471.4 350 470.6 345 469.6 340 468.4 335 467.2 330 466.1 325 466.7 320 468.1 315 469.2 310 470.1 305 470.7 300 471.0 295 471.2 290 471.3 285 471.3 280 471.1 275 470.8 270 470.5 265 470.1 260 469.4 255 468.6 250 467.7 245 466.7 240 465.5 235 464.1 230 462.6 225 461.0 220 461.9 215 462.8 210 463.6 205 464.4 200 464.9 195 465.2 190 465.4 185 465.5 180 465.5 175 465.4 170 465.0 165 464.5 160 463.8 155 463.3 150 463.0 145 462.7 140 462.5 135 462.2 130 462.1 125 462.3 120 463.1 115 464.2 110 464.5 105 463.2 100Z" fill="rgb(147, 150, 148)" stroke="rgb(147, 150, 148)" stroke-width="0.6"/><path d="M463.2 100 464.5 105 464.2 110 463.1 115 462.3 120 462.1 125 462.2 130 462.5 135 462.7 140 463.0 145 463.3 150 463.8 155 464.5 160 465.0 165 465.4 170 465.5 175 465.5 180 465.4 185 465.2 190 464.9 195 464.4 200 463.6 205 462.8 210 461.9 215 461.0 220 462.6 225 464.1 230 465.5 235 466.7 240 467.7 245 468.6 250 469.4 255 470.1 260 470.5 265 470.8 270 471.1 275 471.3 280 471.3 285 471.2 290 471.0 295 470.7 300 470.1 305 469.2 310 468.1 315 466.7 320 466.1 325 467.2 330 468.4 335 469.6 340 470.6 345 471.4 350 471.9 355 472.2 360 472.5 365 472.7 370 472.9 375 473.1 380 473.3 385 473.5 390 473.7 395 473.9 400 474.0 405 474.1 410 474.4 415 474.7 420 475.0 425 475.2 430 475.5 435 475.8 440 476.1 445 476.4 450 476.6 455 476.9 460 477.2 465 477.5 470 477.6 475 477.6 480 480.4 480 480.4 475 480.3 470 479.9 465 479.6 460 479.3 455 479.0 450 478.7 445 478.4 440 478.1 435 477.7 430 477.4 425 477.1 420 476.8 415 476.5 410 476.4 405 476.2 400 476.1 395 475.9 390 475.6 385 475.4 380 475.2 375 475.0 370 474.8 365 474.5 360 474.2 355 473.7 350 472.9 345 471.9 340 470.7 335 469.4 330 468.3 325 469.0 320 470.4 315 471.4 310 472.3 305 472.8 300 473.2 295 473.4 290 473.4 285 473.3 280 473.2 275 472.9 270 472.5 265 472.1 260 471.4 255 470.5 250 469.6 245 468.6 240 467.3 235 466.0 230 464.4 225 462.7 220 463.6 215 464.4 210 465.2 205 465.9 200 466.4 195 466.7 190 466.8 185 466.9 180 466.8 175 466.6 170 466.3 165 465.6 160 465.0 155 464.4 150 464.0 145 463.7 140 463.3 135 463.0 130 462.8 125 462.9 120 463.6 115 464.6 110 464.8 105 463.3 100Z" fill="rgb(149, 152, 150)" stroke="rgb(149, 152, 150)" stroke-width="0.6"/><path d="M463.3 100 464.8 105 464.6 110 463.6 115 462.9 120 462.8 125 463.0 130 463.3 135 463.7 140 464.0 145 464.4 150 465.0 155 465.6 160 466.3 165 466.6 170 466.8 175 466.9 180 466.8 185 466.7 190 466.4 195 465.9 200 465.2 205 464.4 210 463.6 215 462.7 220 464.4 225 466.0 230 467.3 235 468.6 240 469.6 245 470.5 250 471.4 255 472.1 260 472.5 265 472.9 270 473.2 275 473.3 280 473.4 285 473.4 290 473.2 295 472.8 300 472.3 305 471.4 310 470.4 315 469.0 320 468.3 325 469.4 330 470.7 335 471.9 340 472.9 345 473.7 350 474.2 355 474.5 360 474.8 365 475.0 370 475.2 375 475.4 380 475.6 385 475.9 390 476.1 395 476.2 400 476.4 405 476.5 410 476.8 415 477.1 420 477.4 425 477.7 430 478.1 435 478.4 440 478.7 445 479.0 450 479.3 455 479.6 460 479.9 465 480.3 470 480.4 475 480.4 480 483.2 480 483.1 475 483.0 470 482.7 465 482.3 460 482.0 455 481.6 450 481.3 445 481.0 440 480.6 435 480.3 430 479.9 425 479.6 420 479.2 415 478.9 410 478.7 405 478.6 400 478.4 395 478.2 390 478.0 385 477.7 380 477.5 375 477.3 370 477.1 365 476.8 360 476.5 355 476.0 350 475.2 345 474.2 340 473.0 335 471.7 330 470.6 325 471.3 320 472.7 315 473.7 310 474.5 305 475.0 300 475.3 295 475.5 290 475.5 285 475.4 280 475.2 275 474.9 270 474.6 265 474.1 260 473.3 255 472.5 250 471.5 245 470.4 240 469.2 235 467.8 230 466.1 225 464.4 220 465.2 215 466.1 210 466.8 205 467.5 200 467.9 195 468.1 190 468.2 185 468.2 180 468.1 175 467.9 170 467.5 165 466.8 160 466.1 155 465.5 150 465.0 145 464.6 140 464.2 135 463.7 130 463.5 125 463.5 120 464.1 115 465.0 110 465.0 105 463.3 100Z" fill="rgb(151, 154, 152)" stroke="rgb(151, 154, 152)" stroke-width="0.6"/><path d="M463.3 100 465.0 105 465.0 110 464.1 115 463.5 120 463.5 125 463.7 130 464.2 135 464.6 140 465.0 145 465.5 150 466.1 155 466.8 160 467.5 165 467.9 170 468.1 175 468.2 180 468.2 185 468.1 190 467.9 195 467.5 200 466.8 205 466.1 210 465.2 215 464.4 220 466.1 225 467.8 230 469.2 235 470.4 240 471.5 245 472.5 250 473.3 255 474.1 260 474.6 265 474.9 270 475.2 275 475.4 280 475.5 285 475.5 290 475.3 295 475.0 300 474.5 305 473.7 310 472.7 315 471.3 320 470.6 325 471.7 330 473.0 335 474.2 340 475.2 345 476.0 350 476.5 355 476.8 360 477.1 365 477.3 370 477.5 375 477.7 380 478.0 385 478.2 390 478.4 395 478.6 400 478.7 405 478.9 410 479.2 415 479.6 420 479.9 425 480.3 430 480.6 435 481.0 440 481.3 445 481.6 450 482.0 455 482.3 460 482.7 465 483.0 470 483.1 475 483.2 480 486.0 480 485.9 475 485.8 470 485.4 465 485.0 460 484.7 455 484.3 450 483.9 445 483.5 440 483.2 435 482.8 430 482.4 425 482.0 420 481.6 415 481.3 410 481.1 405 481.0 400 480.8 395 480.6 390 480.3 385 480.0 380 479.8 375 479.6 370 479.4 365 479.1 360 478.8 355 478.3 350 477.5 345 476.5 340 475.3 335 473.9 330 472.8 325 473.6 320 475.0 315 476.0 310 476.7 305 477.2 300 477.5 295 477.6 290 477.6 285 477.5 280 477.3 275 477.0 270 476.6 265 476.1 260 475.3 255 474.5 250 473.5 245 472.3 240 471.1 235 469.6 230 467.9 225 466.1 220 466.9 215 467.7 210 468.4 205 469.0 200 469.4 195 469.6 190 469.6 185 469.6 180 469.4 175 469.2 170 468.7 165 468.0 160 467.2 155 466.5 150 466.0 145 465.6 140 465.1 135 464.5 130 464.2 125 464.1 120 464.6 115 465.4 110 465.3 105 463.4 100Z" fill="rgb(154, 157, 155)" stroke="rgb(154, 157, 155)" stroke-width="0.6"/><path d="M463.4 100 465.3 105 465.4 110 464.6 115 464.1 120 464.2 125 464.5 130 465.1 135 465.6 140 466.0 145 466.5 150 467.2 155 468.0 160 468.7 165 469.2 170 469.4 175 469.6 180 469.6 185 469.6 190 469.4 195 469.0 200 468.4 205 467.7 210 466.9 215 466.1 220 467.9 225 469.6 230 471.1 235 472.3 240 473.5 245 474.5 250 475.3 255 476.1 260 476.6 265 477.0 270 477.3 275 477.5 280 477.6 285 477.6 290 477.5 295 477.2 300 476.7 305 476.0 310 475.0 315 473.6 320 472.8 325 473.9 330 475.3 335 476.5 340 477.5 345 478.3 350 478.8 355 479.1 360 479.4 365 479.6 370 479.8 375 480.0 380 480.3 385 480.6 390 480.8 395 481.0 400 481.1 405 481.3 410 481.6 415 482.0 420 482.4 425 482.8 430 483.2 435 483.5 440 483.9 445 484.3 450 484.7 455 485.0 460 485.4 465 485.8 470 485.9 475 486.0 480 488.8 480 488.7 475 488.6 470 488.2 465 487.8 460 487.3 455 486.9 450 486.5 445 486.1 440 485.7 435 485.3 430 484.9 425 484.5 420 484.1 415 483.6 410 483.5 405 483.3 400 483.2 395 482.9 390 482.6 385 482.3 380 482.1 375 481.9 370 481.7 365 481.4 360 481.1 355 480.6 350 479.8 345 478.8 340 477.6 335 476.2 330 475.1 325 476.0 320 477.3 315 478.2 310 478.9 305 479.4 300 479.6 295 479.7 290 479.7 285 479.6 280 479.4 275 479.0 270 478.6 265 478.2 260 477.3 255 476.4 250 475.4 245 474.2 240 472.9 235 471.4 230 469.6 225 467.8 220 468.5 215 469.3 210 470.0 205 470.6 200 470.9 195 471.0 190 471.0 185 470.9 180 470.7 175 470.4 170 469.9 165 469.2 160 468.3 155 467.6 150 467.0 145 466.5 140 465.9 135 465.3 130 464.9 125 464.7 120 465.1 115 465.8 110 465.5 105 463.5 100Z" fill="rgb(156, 159, 157)" stroke="rgb(156, 159, 157)" stroke-width="0.6"/><path d="M463.5 100 465.5 105 465.8 110 465.1 115 464.7 120 464.9 125 465.3 130 465.9 135 466.5 140 467.0 145 467.6 150 468.3 155 469.2 160 469.9 165 470.4 170 470.7 175 470.9 180 471.0 185 471.0 190 470.9 195 470.6 200 470.0 205 469.3 210 468.5 215 467.8 220 469.6 225 471.4 230 472.9 235 474.2 240 475.4 245 476.4 250 477.3 255 478.2 260 478.6 265 479.0 270 479.4 275 479.6 280 479.7 285 479.7 290 479.6 295 479.4 300 478.9 305 478.2 310 477.3 315 476.0 320 475.1 325 476.2 330 477.6 335 478.8 340 479.8 345 480.6 350 481.1 355 481.4 360 481.7 365 481.9 370 482.1 375 482.3 380 482.6 385 482.9 390 483.2 395 483.3 400 483.5 405 483.6 410 484.1 415 484.5 420 484.9 425 485.3 430 485.7 435 486.1 440 486.5 445 486.9 450 487.3 455 487.8 460 488.2 465 488.6 470 488.7 475 488.8 480 491.6 480 491.5 475 491.4 470 490.9 465 490.5 460 490.0 455 489.6 450 489.1 445 488.7 440 488.2 435 487.8 430 487.4 425 486.9 420 486.5 415 486.0 410 485.9 405 485.7 400 485.5 395 485.3 390 485.0 385 484.7 380 484.4 375 484.2 370 484.0 365 483.7 360 483.4 355 482.9 350 482.1 345 481.1 340 479.8 335 478.4 330 477.3 325 478.3 320 479.6 315 480.5 310 481.1 305 481.6 300 481.8 295 481.9 290 481.8 285 481.7 280 481.4 275 481.1 270 480.7 265 480.2 260 479.3 255 478.4 250 477.3 245 476.1 240 474.8 235 473.2 230 471.4 225 469.4 220 470.2 215 471.0 210 471.6 205 472.2 200 472.4 195 472.5 190 472.4 185 472.3 180 472.0 175 471.7 170 471.1 165 470.3 160 469.5 155 468.7 150 468.1 145 467.5 140 466.8 135 466.1 130 465.6 125 465.3 120 465.6 115 466.2 110 465.7 105 463.6 100Z" fill="rgb(157, 160, 158)" stroke="rgb(157, 160, 158)" stroke-width="0.6"/><path d="M463.6 100 465.7 105 466.2 110 465.6 115 465.3 120 465.6 125 466.1 130 466.8 135 467.5 140 468.1 145 468.7 150 469.5 155 470.3 160 471.1 165 471.7 170 472.0 175 472.3 180 472.4 185 472.5 190 472.4 195 472.2 200 471.6 205 471.0 210 470.2 215 469.4 220 471.4 225 473.2 230 474.8 235 476.1 240 477.3 245 478.4 250 479.3 255 480.2 260 480.7 265 481.1 270 481.4 275 481.7 280 481.8 285 481.9 290 481.8 295 481.6 300 481.1 305 480.5 310 479.6 315 478.3 320 477.3 325 478.4 330 479.8 335 481.1 340 482.1 345 482.9 350 483.4 355 483.7 360 484.0 365 484.2 370 484.4 375 484.7 380 485.0 385 485.3 390 485.5 395 485.7 400 485.9 405 486.0 410 486.5 415 486.9 420 487.4 425 487.8 430 488.2 435 488.7 440 489.1 445 489.6 450 490.0 455 490.5 460 490.9 465 491.4 470 491.5 475 491.6 480 494.3 480 494.3 475 494.1 470 493.7 465 493.2 460 492.7 455 492.2 450 491.7 445 491.3 440 490.8 435 490.3 430 489.8 425 489.4 420 488.9 415 488.4 410 488.3 405 488.1 400 487.9 395 487.6 390 487.3 385 487.0 380 486.7 375 486.5 370 486.3 365 486.1 360 485.7 355 485.2 350 484.4 345 483.4 340 482.1 335 480.7 330 479.5 325 480.6 320 481.9 315 482.7 310 483.4 305 483.7 300 483.9 295 484.0 290 483.9 285 483.8 280 483.5 275 483.2 270 482.7 265 482.2 260 481.3 255 480.3 250 479.2 245 478.0 240 476.6 235 475.0 230 473.2 225 471.1 220 471.9 215 472.6 210 473.2 205 473.7 200 473.9 195 473.9 190 473.8 185 473.6 180 473.3 175 472.9 170 472.3 165 471.5 160 470.6 155 469.8 150 469.1 145 468.4 140 467.7 135 466.9 130 466.3 125 466.0 120 466.1 115 466.6 110 466.0 105 463.6 100Z" fill="rgb(159, 162, 160)" stroke="rgb(159, 162, 160)" stroke-width="0.6"/><path d="M463.6 100 466.0 105 466.6 110 466.1 115 466.0 120 466.3 125 466.9 130 467.7 135 468.4 140 469.1 145 469.8 150 470.6 155 471.5 160 472.3 165 472.9 170 473.3 175 473.6 180 473.8 185 473.9 190 473.9 195 473.7 200 473.2 205 472.6 210 471.9 215 471.1 220 473.2 225 475.0 230 476.6 235 478.0 240 479.2 245 480.3 250 481.3 255 482.2 260 482.7 265 483.2 270 483.5 275 483.8 280 483.9 285 484.0 290 483.9 295 483.7 300 483.4 305 482.7 310 481.9 315 480.6 320 479.5 325 480.7 330 482.1 335 483.4 340 484.4 345 485.2 350 485.7 355 486.1 360 486.3 365 486.5 370 486.7 375 487.0 380 487.3 385 487.6 390 487.9 395 488.1 400 488.3 405 488.4 410 488.9 415 489.4 420 489.8 425 490.3 430 490.8 435 491.3 440 491.7 445 492.2 450 492.7 455 493.2 460 493.7 465 494.1 470 494.3 475 494.3 480 497.1 480 497.1 475 496.9 470 496.4 465 495.9 460 495.4 455 494.9 450 494.4 445 493.8 440 493.3 435 492.8 430 492.3 425 491.8 420 491.3 415 490.8 410 490.6 405 490.4 400 490.2 395 489.9 390 489.6 385 489.3 380 489.1 375 488.8 370 488.6 365 488.4 360 488.0 355 487.5 350 486.7 345 485.7 340 484.4 335 482.9 330 481.8 325 482.9 320 484.2 315 485.0 310 485.6 305 485.9 300 486.1 295 486.1 290 486.0 285 485.8 280 485.6 275 485.2 270 484.8 265 484.3 260 483.3 255 482.3 250 481.2 245 479.9 240 478.5 235 476.9 230 474.9 225 472.8 220 473.5 215 474.2 210 474.8 205 475.3 200 475.4 195 475.4 190 475.2 185 475.0 180 474.6 175 474.2 170 473.6 165 472.7 160 471.7 155 470.8 150 470.1 145 469.4 140 468.5 135 467.7 130 467.1 125 466.6 120 466.6 115 467.0 110 466.2 105 463.7 100Z" fill="rgb(161, 164, 162)" stroke="rgb(161, 164, 162)" stroke-width="0.6"/><path d="M463.7 100 466.2 105 467.0 110 466.6 115 466.6 120 467.1 125 467.7 130 468.5 135 469.4 140 470.1 145 470.8 150 471.7 155 472.7 160 473.6 165 474.2 170 474.6 175 475.0 180 475.2 185 475.4 190 475.4 195 475.3 200 474.8 205 474.2 210 473.5 215 472.8 220 474.9 225 476.9 230 478.5 235 479.9 240 481.2 245 482.3 250 483.3 255 484.3 260 484.8 265 485.2 270 485.6 275 485.8 280 486.0 285 486.1 290 486.1 295 485.9 300 485.6 305 485.0 310 484.2 315 482.9 320 481.8 325 482.9 330 484.4 335 485.7 340 486.7 345 487.5 350 488.0 355 488.4 360 488.6 365 488.8 370 489.1 375 489.3 380 489.6 385 489.9 390 490.2 395 490.4 400 490.6 405 490.8 410 491.3 415 491.8 420 492.3 425 492.8 430 493.3 435 493.8 440 494.4 445 494.9 450 495.4 455 495.9 460 496.4 465 496.9 470 497.1 475 497.1 480 499.9 480 499.8 475 499.7 470 499.1 465 498.6 460 498.0 455 497.5 450 497.0 445 496.4 440 495.9 435 495.3 430 494.8 425 494.3 420 493.7 415 493.2 410 493.0 405 492.8 400 492.6 395 492.3 390 491.9 385 491.6 380 491.4 375 491.2 370 490.9 365 490.7 360 490.3 355 489.8 350 489.0 345 488.0 340 486.7 335 485.2 330 484.0 325 485.2 320 486.5 315 487.2 310 487.8 305 488.1 300 488.2 295 488.2 290 488.1 285 487.9 280 487.6 275 487.3 270 486.8 265 486.3 260 485.3 255 484.2 250 483.1 245 481.8 240 480.4 235 478.7 230 476.7 225 474.5 220 475.2 215 475.8 210 476.4 205 476.8 200 476.9 195 476.8 190 476.6 185 476.3 180 476.0 175 475.5 170 474.8 165 473.9 160 472.9 155 471.9 150 471.1 145 470.3 140 469.4 135 468.5 130 467.8 125 467.2 120 467.1 115 467.4 110 466.5 105 463.8 100Z" fill="rgb(163, 166, 164)" stroke="rgb(163, 166, 164)" stroke-width="0.6"/><path d="M463.8 100 466.5 105 467.4 110 467.1 115 467.2 120 467.8 125 468.5 130 469.4 135 470.3 140 471.1 145 471.9 150 472.9 155 473.9 160 474.8 165 475.5 170 476.0 175 476.3 180 476.6 185 476.8 190 476.9 195 476.8 200 476.4 205 475.8 210 475.2 215 474.5 220 476.7 225 478.7 230 480.4 235 481.8 240 483.1 245 484.2 250 485.3 255 486.3 260 486.8 265 487.3 270 487.6 275 487.9 280 488.1 285 488.2 290 488.2 295 488.1 300 487.8 305 487.2 310 486.5 315 485.2 320 484.0 325 485.2 330 486.7 335 488.0 340 489.0 345 489.8 350 490.3 355 490.7 360 490.9 365 491.2 370 491.4 375 491.6 380 491.9 385 492.3 390 492.6 395 492.8 400 493.0 405 493.2 410 493.7 415 494.3 420 494.8 425 495.3 430 495.9 435 496.4 440 497.0 445 497.5 450 498.0 455 498.6 460 499.1 465 499.7 470 499.8 475 499.9 480 502.7 480 502.6 475 502.5 470 501.9 465 501.3 460 500.7 455 500.1 450 499.6 445 499.0 440 498.4 435 497.9 430 497.3 425 496.7 420 496.1 415 495.6 410 495.4 405 495.2 400 494.9 395 494.6 390 494.3 385 493.9 380 493.7 375 493.5 370 493.2 365 493.0 360 492.6 355 492.1 350 491.3 345 490.3 340 488.9 335 487.4 330 486.3 325 487.5 320 488.8 315 489.5 310 490.0 305 490.3 300 490.4 295 490.4 290 490.2 285 490.0 280 489.7 275 489.3 270 488.8 265 488.3 260 487.3 255 486.2 250 485.0 245 483.7 240 482.2 235 480.5 230 478.4 225 476.2 220 476.8 215 477.5 210 478.0 205 478.4 200 478.4 195 478.3 190 478.0 185 477.7 180 477.3 175 476.7 170 476.0 165 475.0 160 474.0 155 473.0 150 472.1 145 471.3 140 470.3 135 469.3 130 468.5 125 467.8 120 467.6 115 467.8 110 466.7 105 463.9 100Z" fill="rgb(168, 171, 169)" stroke="rgb(168, 171, 169)" stroke-width="0.6"/><path d="M463.9 100 466.7 105 467.8 110 467.6 115 467.8 120 468.5 125 469.3 130 470.3 135 471.3 140 472.1 145 473.0 150 474.0 155 475.0 160 476.0 165 476.7 170 477.3 175 477.7 180 478.0 185 478.3 190 478.4 195 478.4 200 478.0 205 477.5 210 476.8 215 476.2 220 478.4 225 480.5 230 482.2 235 483.7 240 485.0 245 486.2 250 487.3 255 488.3 260 488.8 265 489.3 270 489.7 275 490.0 280 490.2 285 490.4 290 490.4 295 490.3 300 490.0 305 489.5 310 488.8 315 487.5 320 486.3 325 487.4 330 488.9 335 490.3 340 491.3 345 492.1 350 492.6 355 493.0 360 493.2 365 493.5 370 493.7 375 493.9 380 494.3 385 494.6 390 494.9 395 495.2 400 495.4 405 495.6 410 496.1 415 496.7 420 497.3 425 497.9 430 498.4 435 499.0 440 499.6 445 500.1 450 500.7 455 501.3 460 501.9 465 502.5 470 502.6 475 502.7 480 505.5 480 505.4 475 505.2 470 504.6 465 504.0 460 503.4 455 502.8 450 502.2 445 501.6 440 501.0 435 500.4 430 499.8 425 499.2 420 498.6 415 497.9 410 497.8 405 497.5 400 497.3 395 497.0 390 496.6 385 496.3 380 496.0 375 495.8 370 495.5 365 495.3 360 494.9 355 494.4 350 493.6 345 492.5 340 491.2 335 489.7 330 488.5 325 489.9 320 491.0 315 491.8 310 492.2 305 492.5 300 492.5 295 492.5 290 492.3 285 492.1 280 491.8 275 491.4 270 490.9 265 490.3 260 489.3 255 488.1 250 486.9 245 485.6 240 484.1 235 482.3 230 480.2 225 477.9 220 478.5 215 479.1 210 479.6 205 479.9 200 479.9 195 479.7 190 479.4 185 479.0 180 478.6 175 478.0 170 477.2 165 476.2 160 475.1 155 474.1 150 473.1 145 472.2 140 471.2 135 470.1 130 469.2 125 468.4 120 468.1 115 468.2 110 466.9 105 463.9 100Z" fill="rgb(173, 176, 174)" stroke="rgb(173, 176, 174)" stroke-width="0.6"/><path d="M463.9 100 466.9 105 468.2 110 468.1 115 468.4 120 469.2 125 470.1 130 471.2 135 472.2 140 473.1 145 474.1 150 475.1 155 476.2 160 477.2 165 478.0 170 478.6 175 479.0 180 479.4 185 479.7 190 479.9 195 479.9 200 479.6 205 479.1 210 478.5 215 477.9 220 480.2 225 482.3 230 484.1 235 485.6 240 486.9 245 488.1 250 489.3 255 490.3 260 490.9 265 491.4 270 491.8 275 492.1 280 492.3 285 492.5 290 492.5 295 492.5 300 492.2 305 491.8 310 491.0 315 489.9 320 488.5 325 489.7 330 491.2 335 492.5 340 493.6 345 494.4 350 494.9 355 495.3 360 495.5 365 495.8 370 496.0 375 496.3 380 496.6 385 497.0 390 497.3 395 497.5 400 497.8 405 497.9 410 498.6 415 499.2 420 499.8 425 500.4 430 501.0 435 501.6 440 502.2 445 502.8 450 503.4 455 504.0 460 504.6 465 505.2 470 505.4 475 505.5 480 508.3 480 508.2 475 508.0 470 507.4 465 506.7 460 506.1 455 505.4 450 504.8 445 504.2 440 503.5 435 502.9 430 502.2 425 501.6 420 501.0 415 500.3 410 500.1 405 499.9 400 499.6 395 499.3 390 498.9 385 498.6 380 498.3 375 498.1 370 497.8 365 497.6 360 497.2 355 496.7 350 495.9 345 494.8 340 493.5 335 491.9 330 490.8 325 492.2 320 493.3 315 494.0 310 494.4 305 494.7 300 494.7 295 494.6 290 494.4 285 494.2 280 493.8 275 493.4 270 492.9 265 492.4 260 491.3 255 490.1 250 488.8 245 487.5 240 485.9 235 484.1 230 482.0 225 479.6 220 480.2 215 480.7 210 481.2 205 481.5 200 481.4 195 481.2 190 480.8 185 480.4 180 479.9 175 479.2 170 478.4 165 477.4 160 476.2 155 475.1 150 474.2 145 473.2 140 472.0 135 470.9 130 469.9 125 469.0 120 468.6 115 468.6 110 467.2 105 464.0 100Z" fill="rgb(184, 187, 185)" stroke="rgb(184, 187, 185)" stroke-width="0.6"/><path d="M464.0 100 467.2 105 468.6 110 468.6 115 469.0 120 469.9 125 470.9 130 472.0 135 473.2 140 474.2 145 475.1 150 476.2 155 477.4 160 478.4 165 479.2 170 479.9 175 480.4 180 480.8 185 481.2 190 481.4 195 481.5 200 481.2 205 480.7 210 480.2 215 479.6 220 482.0 225 484.1 230 485.9 235 487.5 240 488.8 245 490.1 250 491.3 255 492.4 260 492.9 265 493.4 270 493.8 275 494.2 280 494.4 285 494.6 290 494.7 295 494.7 300 494.4 305 494.0 310 493.3 315 492.2 320 490.8 325 491.9 330 493.5 335 494.8 340 495.9 345 496.7 350 497.2 355 497.6 360 497.8 365 498.1 370 498.3 375 498.6 380 498.9 385 499.3 390 499.6 395 499.9 400 500.1 405 500.3 410 501.0 415 501.6 420 502.2 425 502.9 430 503.5 435 504.2 440 504.8 445 505.4 450 506.1 455 506.7 460 507.4 465 508.0 470 508.2 475 508.3 480 511.1 480 511.0 475 510.8 470 510.1 465 509.4 460 508.8 455 508.1 450 507.4 445 506.7 440 506.1 435 505.4 430 504.7 425 504.1 420 503.4 415 502.7 410 502.5 405 502.3 400 502.0 395 501.7 390 501.3 385 500.9 380 500.6 375 500.4 370 500.2 365 499.9 360 499.5 355 499.1 350 498.2 345 497.1 340 495.8 335 494.2 330 493.0 325 494.5 320 495.6 315 496.3 310 496.7 305 496.8 300 496.8 295 496.7 290 496.5 285 496.3 280 495.9 275 495.5 270 495.0 265 494.4 260 493.3 255 492.1 250 490.8 245 489.4 240 487.8 235 485.9 230 483.7 225 481.2 220 481.8 215 482.4 210 482.8 205 483.1 200 482.9 195 482.6 190 482.2 185 481.7 180 481.2 175 480.5 170 479.6 165 478.5 160 477.4 155 476.2 150 475.2 145 474.1 140 472.9 135 471.6 130 470.6 125 469.6 120 469.1 115 469.0 110 467.4 105 464.1 100Z" fill="rgb(199, 202, 200)" stroke="rgb(199, 202, 200)" stroke-width="0.6"/><path d="M464.1 100 467.4 105 469.0 110 469.1 115 469.6 120 470.6 125 471.6 130 472.9 135 474.1 140 475.2 145 476.2 150 477.4 155 478.5 160 479.6 165 480.5 170 481.2 175 481.7 180 482.2 185 482.6 190 482.9 195 483.1 200 482.8 205 482.4 210 481.8 215 481.2 220 483.7 225 485.9 230 487.8 235 489.4 240 490.8 245 492.1 250 493.3 255 494.4 260 495.0 265 495.5 270 495.9 275 496.3 280 496.5 285 496.7 290 496.8 295 496.8 300 496.7 305 496.3 310 495.6 315 494.5 320 493.0 325 494.2 330 495.8 335 497.1 340 498.2 345 499.1 350 499.5 355 499.9 360 500.2 365 500.4 370 500.6 375 500.9 380 501.3 385 501.7 390 502.0 395 502.3 400 502.5 405 502.7 410 503.4 415 504.1 420 504.7 425 505.4 430 506.1 435 506.7 440 507.4 445 508.1 450 508.8 455 509.4 460 510.1 465 510.8 470 511.0 475 511.1 480 513.9 480 513.8 475 513.6 470 512.9 465 512.1 460 511.4 455 510.7 450 510.0 445 509.3 440 508.6 435 507.9 430 507.2 425 506.5 420 505.8 415 505.1 410 504.9 405 504.6 400 504.4 395 504.0 390 503.6 385 503.2 380 502.9 375 502.7 370 502.5 365 502.2 360 501.8 355 501.4 350 500.6 345 499.4 340 498.0 335 496.4 330 495.3 325 496.8 320 497.9 315 498.5 310 498.9 305 499.0 300 499.0 295 498.9 290 498.6 285 498.3 280 498.0 275 497.5 270 497.0 265 496.4 260 495.2 255 494.0 250 492.7 245 491.3 240 489.6 235 487.8 230 485.5 225 482.9 220 483.5 215 484.0 210 484.4 205 484.6 200 484.4 195 484.0 190 483.6 185 483.1 180 482.5 175 481.8 170 480.9 165 479.7 160 478.5 155 477.3 150 476.2 145 475.1 140 473.8 135 472.4 130 471.3 125 470.2 120 469.6 115 469.4 110 467.7 105 464.2 100Z" fill="rgb(214, 217, 215)" stroke="rgb(214, 217, 215)" stroke-width="0.6"/><path d="M464.2 100 467.7 105 469.4 110 469.6 115 470.2 120 471.3 125 472.4 130 473.8 135 475.1 140 476.2 145 477.3 150 478.5 155 479.7 160 480.9 165 481.8 170 482.5 175 483.1 180 483.6 185 484.0 190 484.4 195 484.6 200 484.4 205 484.0 210 483.5 215 482.9 220 485.5 225 487.8 230 489.6 235 491.3 240 492.7 245 494.0 250 495.2 255 496.4 260 497.0 265 497.5 270 498.0 275 498.3 280 498.6 285 498.9 290 499.0 295 499.0 300 498.9 305 498.5 310 497.9 315 496.8 320 495.3 325 496.4 330 498.0 335 499.4 340 500.6 345 501.4 350 501.8 355 502.2 360 502.5 365 502.7 370 502.9 375 503.2 380 503.6 385 504.0 390 504.4 395 504.6 400 504.9 405 505.1 410 505.8 415 506.5 420 507.2 425 507.9 430 508.6 435 509.3 440 510.0 445 510.7 450 511.4 455 512.1 460 512.9 465 513.6 470 513.8 475 513.9 480 516.5 480 516.4 475 516.2 470 515.4 465 514.7 460 514.0 455 513.3 450 512.6 445 511.8 440 511.1 435 510.4 430 509.7 425 509.0 420 508.3 415 507.5 410 507.3 405 507.1 400 506.8 395 506.4 390 506.0 385 505.6 380 505.3 375 505.1 370 504.8 365 504.5 360 504.2 355 503.7 350 502.9 345 501.8 340 500.4 335 498.8 330 497.6 325 499.2 320 500.3 315 500.9 310 501.2 305 501.3 300 501.3 295 501.1 290 500.9 285 500.6 280 500.2 275 499.7 270 499.2 265 498.6 260 497.4 255 496.2 250 494.8 245 493.4 240 491.8 235 489.9 230 487.5 225 485.0 220 485.5 215 486.0 210 486.4 205 486.6 200 486.4 195 486.0 190 485.4 185 484.9 180 484.3 175 483.6 170 482.6 165 481.5 160 480.2 155 479.0 150 477.8 145 476.6 140 475.2 135 473.8 130 472.6 125 471.4 120 470.5 115 470.2 110 468.1 105 464.3 100Z" fill="rgb(230, 232, 230)" stroke="rgb(230, 232, 230)" stroke-width="0.6"/><path d="M464.3 100 468.1 105 470.2 110 470.5 115 471.4 120 472.6 125 473.8 130 475.2 135 476.6 140 477.8 145 479.0 150 480.2 155 481.5 160 482.6 165 483.6 170 484.3 175 484.9 180 485.4 185 486.0 190 486.4 195 486.6 200 486.4 205 486.0 210 485.5 215 485.0 220 487.5 225 489.9 230 491.8 235 493.4 240 494.8 245 496.2 250 497.4 255 498.6 260 499.2 265 499.7 270 500.2 275 500.6 280 500.9 285 501.1 290 501.3 295 501.3 300 501.2 305 500.9 310 500.3 315 499.2 320 497.6 325 498.8 330 500.4 335 501.8 340 502.9 345 503.7 350 504.2 355 504.5 360 504.8 365 505.1 370 505.3 375 505.6 380 506.0 385 506.4 390 506.8 395 507.1 400 507.3 405 507.5 410 508.3 415 509.0 420 509.7 425 510.4 430 511.1 435 511.8 440 512.6 445 513.3 450 514.0 455 514.7 460 515.4 465 516.2 470 516.4 475 516.5 480 518.6 480 518.5 475 518.2 470 517.6 465 516.9 460 516.2 455 515.5 450 514.9 445 514.2 440 513.5 435 512.8 430 512.2 425 511.5 420 510.8 415 510.1 410 509.9 405 509.7 400 509.3 395 509.0 390 508.5 385 508.1 380 507.8 375 507.6 370 507.3 365 507.1 360 506.7 355 506.2 350 505.5 345 504.4 340 503.0 335 501.3 330 500.2 325 501.9 320 503.0 315 503.6 310 503.9 305 503.9 300 503.9 295 503.7 290 503.5 285 503.2 280 502.8 275 502.3 270 501.8 265 501.2 260 500.1 255 498.9 250 497.7 245 496.3 240 494.8 235 492.9 230 490.6 225 488.0 220 488.6 215 489.2 210 489.7 205 489.9 200 489.7 195 489.3 190 488.8 185 488.3 180 487.8 175 487.1 170 486.2 165 485.0 160 483.8 155 482.6 150 481.4 145 480.1 140 478.6 135 477.0 130 475.6 125 474.1 120 472.9 115 472.1 110 469.3 105 464.7 100Z" fill="rgb(221, 223, 221)" stroke="rgb(221, 223, 221)" stroke-width="0.6"/><path d="M464.7 100 469.3 105 472.1 110 472.9 115 474.1 120 475.6 125 477.0 130 478.6 135 480.1 140 481.4 145 482.6 150 483.8 155 485.0 160 486.2 165 487.1 170 487.8 175 488.3 180 488.8 185 489.3 190 489.7 195 489.9 200 489.7 205 489.2 210 488.6 215 488.0 220 490.6 225 492.9 230 494.8 235 496.3 240 497.7 245 498.9 250 500.1 255 501.2 260 501.8 265 502.3 270 502.8 275 503.2 280 503.5 285 503.7 290 503.9 295 503.9 300 503.9 305 503.6 310 503.0 315 501.9 320 500.2 325 501.3 330 503.0 335 504.4 340 505.5 345 506.2 350 506.7 355 507.1 360 507.3 365 507.6 370 507.8 375 508.1 380 508.5 385 509.0 390 509.3 395 509.7 400 509.9 405 510.1 410 510.8 415 511.5 420 512.2 425 512.8 430 513.5 435 514.2 440 514.9 445 515.5 450 516.2 455 516.9 460 517.6 465 518.2 470 518.5 475 518.6 480 520.6 480 520.5 475 520.3 470 519.7 465 519.0 460 518.4 455 517.8 450 517.2 445 516.5 440 515.9 435 515.3 430 514.7 425 514.0 420 513.4 415 512.8 410 512.5 405 512.2 400 511.9 395 511.5 390 511.1 385 510.7 380 510.4 375 510.1 370 509.9 365 509.6 360 509.2 355 508.8 350 508.0 345 506.9 340 505.5 335 503.9 330 502.8 325 504.6 320 505.7 315 506.2 310 506.5 305 506.6 300 506.5 295 506.3 290 506.1 285 505.8 280 505.4 275 504.9 270 504.4 265 503.9 260 502.8 255 501.7 250 500.5 245 499.2 240 497.7 235 495.9 230 493.7 225 491.1 220 491.7 215 492.4 210 492.9 205 493.2 200 493.1 195 492.7 190 492.2 185 491.8 180 491.2 175 490.6 170 489.7 165 488.6 160 487.4 155 486.1 150 484.9 145 483.6 140 481.9 135 480.2 130 478.7 125 476.8 120 475.2 115 474.1 110 470.5 105 465.0 100Z" fill="rgb(203, 205, 203)" stroke="rgb(203, 205, 203)" stroke-width="0.6"/><path d="M465.0 100 470.5 105 474.1 110 475.2 115 476.8 120 478.7 125 480.2 130 481.9 135 483.6 140 484.9 145 486.1 150 487.4 155 488.6 160 489.7 165 490.6 170 491.2 175 491.8 180 492.2 185 492.7 190 493.1 195 493.2 200 492.9 205 492.4 210 491.7 215 491.1 220 493.7 225 495.9 230 497.7 235 499.2 240 500.5 245 501.7 250 502.8 255 503.9 260 504.4 265 504.9 270 505.4 275 505.8 280 506.1 285 506.3 290 506.5 295 506.6 300 506.5 305 506.2 310 505.7 315 504.6 320 502.8 325 503.9 330 505.5 335 506.9 340 508.0 345 508.8 350 509.2 355 509.6 360 509.9 365 510.1 370 510.4 375 510.7 380 511.1 385 511.5 390 511.9 395 512.2 400 512.5 405 512.8 410 513.4 415 514.0 420 514.7 425 515.3 430 515.9 435 516.5 440 517.2 445 517.8 450 518.4 455 519.0 460 519.7 465 520.3 470 520.5 475 520.6 480 522.7 480 522.6 475 522.4 470 521.8 465 521.2 460 520.6 455 520.0 450 519.5 445 518.9 440 518.3 435 517.7 430 517.1 425 516.6 420 516.0 415 515.4 410 515.1 405 514.8 400 514.5 395 514.1 390 513.6 385 513.2 380 512.9 375 512.6 370 512.4 365 512.1 360 511.8 355 511.3 350 510.6 345 509.5 340 508.1 335 506.4 330 505.4 325 507.3 320 508.4 315 508.9 310 509.1 305 509.2 300 509.1 295 509.0 290 508.7 285 508.4 280 508.0 275 507.6 270 507.1 265 506.5 260 505.5 255 504.5 250 503.4 245 502.1 240 500.7 235 499.0 230 496.7 225 494.1 220 494.9 215 495.6 210 496.2 205 496.5 200 496.4 195 496.0 190 495.6 185 495.2 180 494.7 175 494.1 170 493.2 165 492.2 160 491.0 155 489.7 150 488.5 145 487.1 140 485.3 135 483.4 130 481.7 125 479.6 120 477.6 115 476.0 110 471.7 105 465.4 100Z" fill="rgb(191, 193, 191)" stroke="rgb(191, 193, 191)" stroke-width="0.6"/><path d="M465.4 100 471.7 105 476.0 110 477.6 115 479.6 120 481.7 125 483.4 130 485.3 135 487.1 140 488.5 145 489.7 150 491.0 155 492.2 160 493.2 165 494.1 170 494.7 175 495.2 180 495.6 185 496.0 190 496.4 195 496.5 200 496.2 205 495.6 210 494.9 215 494.1 220 496.7 225 499.0 230 500.7 235 502.1 240 503.4 245 504.5 250 505.5 255 506.5 260 507.1 265 507.6 270 508.0 275 508.4 280 508.7 285 509.0 290 509.1 295 509.2 300 509.1 305 508.9 310 508.4 315 507.3 320 505.4 325 506.4 330 508.1 335 509.5 340 510.6 345 511.3 350 511.8 355 512.1 360 512.4 365 512.6 370 512.9 375 513.2 380 513.6 385 514.1 390 514.5 395 514.8 400 515.1 405 515.4 410 516.0 415 516.6 420 517.1 425 517.7 430 518.3 435 518.9 440 519.5 445 520.0 450 520.6 455 521.2 460 521.8 465 522.4 470 522.6 475 522.7 480 524.8 480 524.7 475 524.5 470 523.9 465 523.4 460 522.8 455 522.3 450 521.8 445 521.2 440 520.7 435 520.2 430 519.6 425 519.1 420 518.5 415 518.0 410 517.7 405 517.4 400 517.1 395 516.6 390 516.2 385 515.8 380 515.4 375 515.2 370 514.9 365 514.6 360 514.3 355 513.8 350 513.1 345 512.0 340 510.7 335 509.0 330 508.0 325 510.0 320 511.1 315 511.6 310 511.8 305 511.8 300 511.7 295 511.6 290 511.3 285 511.0 280 510.6 275 510.2 270 509.7 265 509.1 260 508.2 255 507.2 250 506.2 245 505.0 240 503.7 235 502.0 230 499.8 225 497.2 220 498.0 215 498.8 210 499.5 205 499.8 200 499.7 195 499.4 190 499.0 185 498.6 180 498.2 175 497.6 170 496.8 165 495.7 160 494.6 155 493.3 150 492.1 145 490.6 140 488.6 135 486.6 130 484.7 125 482.3 120 479.9 115 478.0 110 472.9 105 465.8 100Z" fill="rgb(180, 182, 180)" stroke="rgb(180, 182, 180)" stroke-width="0.6"/><path d="M465.8 100 472.9 105 478.0 110 479.9 115 482.3 120 484.7 125 486.6 130 488.6 135 490.6 140 492.1 145 493.3 150 494.6 155 495.7 160 496.8 165 497.6 170 498.2 175 498.6 180 499.0 185 499.4 190 499.7 195 499.8 200 499.5 205 498.8 210 498.0 215 497.2 220 499.8 225 502.0 230 503.7 235 505.0 240 506.2 245 507.2 250 508.2 255 509.1 260 509.7 265 510.2 270 510.6 275 511.0 280 511.3 285 511.6 290 511.7 295 511.8 300 511.8 305 511.6 310 511.1 315 510.0 320 508.0 325 509.0 330 510.7 335 512.0 340 513.1 345 513.8 350 514.3 355 514.6 360 514.9 365 515.2 370 515.4 375 515.8 380 516.2 385 516.6 390 517.1 395 517.4 400 517.7 405 518.0 410 518.5 415 519.1 420 519.6 425 520.2 430 520.7 435 521.2 440 521.8 445 522.3 450 522.8 455 523.4 460 523.9 465 524.5 470 524.7 475 524.8 480 526.9 480 526.8 475 526.5 470 526.0 465 525.5 460 525.1 455 524.6 450 524.1 445 523.6 440 523.1 435 522.6 430 522.1 425 521.6 420 521.1 415 520.6 410 520.3 405 520.0 400 519.7 395 519.2 390 518.7 385 518.3 380 518.0 375 517.7 370 517.4 365 517.1 360 516.8 355 516.4 350 515.7 345 514.6 340 513.2 335 511.6 330 510.6 325 512.6 320 513.8 315 514.3 310 514.4 305 514.5 300 514.4 295 514.2 290 513.9 285 513.6 280 513.2 275 512.8 270 512.3 265 511.8 260 510.9 255 510.0 250 509.0 245 507.9 240 506.7 235 505.0 230 502.8 225 500.2 220 501.1 215 502.0 210 502.7 205 503.1 200 503.1 195 502.8 190 502.4 185 502.0 180 501.6 175 501.1 170 500.3 165 499.3 160 498.1 155 496.9 150 495.6 145 494.0 140 492.0 135 489.8 130 487.8 125 485.0 120 482.2 115 479.9 110 474.1 105 466.2 100Z" fill="rgb(171, 173, 171)" stroke="rgb(171, 173, 171)" stroke-width="0.6"/><path d="M466.2 100 474.1 105 479.9 110 482.2 115 485.0 120 487.8 125 489.8 130 492.0 135 494.0 140 495.6 145 496.9 150 498.1 155 499.3 160 500.3 165 501.1 170 501.6 175 502.0 180 502.4 185 502.8 190 503.1 195 503.1 200 502.7 205 502.0 210 501.1 215 500.2 220 502.8 225 505.0 230 506.7 235 507.9 240 509.0 245 510.0 250 510.9 255 511.8 260 512.3 265 512.8 270 513.2 275 513.6 280 513.9 285 514.2 290 514.4 295 514.5 300 514.4 305 514.3 310 513.8 315 512.6 320 510.6 325 511.6 330 513.2 335 514.6 340 515.7 345 516.4 350 516.8 355 517.1 360 517.4 365 517.7 370 518.0 375 518.3 380 518.7 385 519.2 390 519.7 395 520.0 400 520.3 405 520.6 410 521.1 415 521.6 420 522.1 425 522.6 430 523.1 435 523.6 440 524.1 445 524.6 450 525.1 455 525.5 460 526.0 465 526.5 470 526.8 475 526.9 480 529.0 480 528.9 475 528.6 470 528.2 465 527.7 460 527.3 455 526.8 450 526.4 445 525.9 440 525.5 435 525.0 430 524.6 425 524.1 420 523.7 415 523.2 410 522.9 405 522.6 400 522.2 395 521.8 390 521.3 385 520.8 380 520.5 375 520.2 370 520.0 365 519.7 360 519.3 355 518.9 350 518.2 345 517.2 340 515.8 335 514.1 330 513.1 325 515.3 320 516.5 315 516.9 310 517.1 305 517.1 300 517.0 295 516.8 290 516.5 285 516.2 280 515.9 275 515.4 270 515.0 265 514.4 260 513.6 255 512.8 250 511.9 245 510.9 240 509.7 235 508.1 230 505.9 225 503.3 220 504.3 215 505.2 210 506.0 205 506.4 200 506.4 195 506.1 190 505.8 185 505.4 180 505.1 175 504.6 170 503.8 165 502.9 160 501.7 155 500.5 150 499.2 145 497.5 140 495.3 135 493.0 130 490.8 125 487.8 120 484.6 115 481.9 110 475.3 105 466.5 100Z" fill="rgb(165, 167, 165)" stroke="rgb(165, 167, 165)" stroke-width="0.6"/><path d="M466.5 100 475.3 105 481.9 110 484.6 115 487.8 120 490.8 125 493.0 130 495.3 135 497.5 140 499.2 145 500.5 150 501.7 155 502.9 160 503.8 165 504.6 170 505.1 175 505.4 180 505.8 185 506.1 190 506.4 195 506.4 200 506.0 205 505.2 210 504.3 215 503.3 220 505.9 225 508.1 230 509.7 235 510.9 240 511.9 245 512.8 250 513.6 255 514.4 260 515.0 265 515.4 270 515.9 275 516.2 280 516.5 285 516.8 290 517.0 295 517.1 300 517.1 305 516.9 310 516.5 315 515.3 320 513.1 325 514.1 330 515.8 335 517.2 340 518.2 345 518.9 350 519.3 355 519.7 360 520.0 365 520.2 370 520.5 375 520.8 380 521.3 385 521.8 390 522.2 395 522.6 400 522.9 405 523.2 410 523.7 415 524.1 420 524.6 425 525.0 430 525.5 435 525.9 440 526.4 445 526.8 450 527.3 455 527.7 460 528.2 465 528.6 470 528.9 475 529.0 480 531.1 480 530.9 475 530.7 470 530.3 465 529.9 460 529.5 455 529.1 450 528.7 445 528.3 440 527.9 435 527.5 430 527.1 425 526.7 420 526.2 415 525.8 410 525.5 405 525.2 400 524.8 395 524.3 390 523.8 385 523.4 380 523.0 375 522.8 370 522.5 365 522.2 360 521.8 355 521.4 350 520.8 345 519.7 340 518.4 335 516.7 330 515.7 325 518.0 320 519.2 315 519.6 310 519.7 305 519.7 300 519.6 295 519.4 290 519.2 285 518.8 280 518.5 275 518.1 270 517.6 265 517.1 260 516.3 255 515.6 250 514.7 245 513.8 240 512.6 235 511.1 230 508.9 225 506.3 220 507.4 215 508.4 210 509.3 205 509.7 200 509.7 195 509.5 190 509.1 185 508.9 180 508.5 175 508.1 170 507.4 165 506.4 160 505.3 155 504.1 150 502.7 145 501.0 140 498.7 135 496.2 130 493.8 125 490.5 120 486.9 115 483.9 110 476.5 105 466.9 100Z" fill="rgb(159, 161, 159)" stroke="rgb(159, 161, 159)" stroke-width="0.6"/><path d="M466.9 100 476.5 105 483.9 110 486.9 115 490.5 120 493.8 125 496.2 130 498.7 135 501.0 140 502.7 145 504.1 150 505.3 155 506.4 160 507.4 165 508.1 170 508.5 175 508.9 180 509.1 185 509.5 190 509.7 195 509.7 200 509.3 205 508.4 210 507.4 215 506.3 220 508.9 225 511.1 230 512.6 235 513.8 240 514.7 245 515.6 250 516.3 255 517.1 260 517.6 265 518.1 270 518.5 275 518.8 280 519.2 285 519.4 290 519.6 295 519.7 300 519.7 305 519.6 310 519.2 315 518.0 320 515.7 325 516.7 330 518.4 335 519.7 340 520.8 345 521.4 350 521.8 355 522.2 360 522.5 365 522.8 370 523.0 375 523.4 380 523.8 385 524.3 390 524.8 395 525.2 400 525.5 405 525.8 410 526.2 415 526.7 420 527.1 425 527.5 430 527.9 435 528.3 440 528.7 445 529.1 450 529.5 455 529.9 460 530.3 465 530.7 470 530.9 475 531.1 480 533.1 480 533.0 475 532.8 470 532.4 465 532.0 460 531.7 455 531.3 450 531.0 445 530.6 440 530.3 435 529.9 430 529.5 425 529.2 420 528.8 415 528.4 410 528.1 405 527.8 400 527.4 395 526.9 390 526.4 385 525.9 380 525.6 375 525.3 370 525.0 365 524.7 360 524.4 355 523.9 350 523.3 345 522.3 340 520.9 335 519.3 330 518.3 325 520.7 320 521.9 315 522.3 310 522.4 305 522.4 300 522.2 295 522.0 290 521.8 285 521.5 280 521.1 275 520.7 270 520.2 265 519.7 260 519.0 255 518.3 250 517.6 245 516.7 240 515.6 235 514.1 230 512.0 225 509.4 220 510.5 215 511.6 210 512.5 205 513.1 200 513.1 195 512.8 190 512.5 185 512.3 180 512.0 175 511.6 170 510.9 165 510.0 160 508.9 155 507.7 150 506.3 145 504.5 140 502.0 135 499.3 130 496.9 125 493.2 120 489.3 115 485.8 110 477.7 105 467.3 100Z" fill="rgb(154, 156, 154)" stroke="rgb(154, 156, 154)" stroke-width="0.6"/><path d="M467.3 100 477.7 105 485.8 110 489.3 115 493.2 120 496.9 125 499.3 130 502.0 135 504.5 140 506.3 145 507.7 150 508.9 155 510.0 160 510.9 165 511.6 170 512.0 175 512.3 180 512.5 185 512.8 190 513.1 195 513.1 200 512.5 205 511.6 210 510.5 215 509.4 220 512.0 225 514.1 230 515.6 235 516.7 240 517.6 245 518.3 250 519.0 255 519.7 260 520.2 265 520.7 270 521.1 275 521.5 280 521.8 285 522.0 290 522.2 295 522.4 300 522.4 305 522.3 310 521.9 315 520.7 320 518.3 325 519.3 330 520.9 335 522.3 340 523.3 345 523.9 350 524.4 355 524.7 360 525.0 365 525.3 370 525.6 375 525.9 380 526.4 385 526.9 390 527.4 395 527.8 400 528.1 405 528.4 410 528.8 415 529.2 420 529.5 425 529.9 430 530.3 435 530.6 440 531.0 445 531.3 450 531.7 455 532.0 460 532.4 465 532.8 470 533.0 475 533.1 480 535.2 480 535.1 475 534.8 470 534.5 465 534.2 460 533.9 455 533.6 450 533.3 445 533.0 440 532.7 435 532.3 430 532.0 425 531.7 420 531.4 415 531.0 410 530.7 405 530.4 400 530.0 395 529.5 390 528.9 385 528.5 380 528.1 375 527.8 370 527.5 365 527.2 360 526.9 355 526.5 350 525.9 345 524.9 340 523.5 335 521.8 330 520.9 325 523.4 320 524.6 315 525.0 310 525.0 305 525.0 300 524.8 295 524.6 290 524.4 285 524.1 280 523.7 275 523.3 270 522.8 265 522.3 260 521.8 255 521.1 250 520.4 245 519.6 240 518.6 235 517.2 230 515.0 225 512.4 220 513.6 215 514.8 210 515.8 205 516.4 200 516.4 195 516.2 190 515.9 185 515.7 180 515.5 175 515.1 170 514.5 165 513.6 160 512.5 155 511.3 150 509.9 145 508.0 140 505.4 135 502.5 130 499.9 125 496.0 120 491.6 115 487.8 110 478.9 105 467.6 100Z" fill="rgb(146, 148, 146)" stroke="rgb(146, 148, 146)" stroke-width="0.6"/><path d="M467.6 100 478.9 105 487.8 110 491.6 115 496.0 120 499.9 125 502.5 130 505.4 135 508.0 140 509.9 145 511.3 150 512.5 155 513.6 160 514.5 165 515.1 170 515.5 175 515.7 180 515.9 185 516.2 190 516.4 195 516.4 200 515.8 205 514.8 210 513.6 215 512.4 220 515.0 225 517.2 230 518.6 235 519.6 240 520.4 245 521.1 250 521.8 255 522.3 260 522.8 265 523.3 270 523.7 275 524.1 280 524.4 285 524.6 290 524.8 295 525.0 300 525.0 305 525.0 310 524.6 315 523.4 320 520.9 325 521.8 330 523.5 335 524.9 340 525.9 345 526.5 350 526.9 355 527.2 360 527.5 365 527.8 370 528.1 375 528.5 380 528.9 385 529.5 390 530.0 395 530.4 400 530.7 405 531.0 410 531.4 415 531.7 420 532.0 425 532.3 430 532.7 435 533.0 440 533.3 445 533.6 450 533.9 455 534.2 460 534.5 465 534.8 470 535.1 475 535.2 480 537.3 480 537.2 475 536.9 470 536.6 465 536.4 460 536.1 455 535.8 450 535.6 445 535.3 440 535.1 435 534.8 430 534.5 425 534.2 420 533.9 415 533.6 410 533.3 405 533.0 400 532.6 395 532.0 390 531.5 385 531.0 380 530.6 375 530.3 370 530.1 365 529.8 360 529.4 355 529.0 350 528.4 345 527.4 340 526.1 335 524.4 330 523.5 325 526.1 320 527.3 315 527.6 310 527.7 305 527.6 300 527.5 295 527.3 290 527.0 285 526.7 280 526.3 275 525.9 270 525.5 265 525.0 260 524.5 255 523.9 250 523.2 245 522.5 240 521.6 235 520.2 230 518.1 225 515.5 220 516.8 215 518.0 210 519.0 205 519.7 200 519.8 195 519.6 190 519.3 185 519.1 180 518.9 175 518.6 170 518.0 165 517.1 160 516.1 155 514.9 150 513.4 145 511.5 140 508.7 135 505.7 130 502.9 125 498.7 120 494.0 115 489.7 110 480.1 105 468.0 100Z" fill="rgb(138, 140, 139)" stroke="rgb(138, 140, 139)" stroke-width="0.6"/></g></g>
 <path d="M462.6 106.6 L462.4 107.0 L462.2 107.5 L462.0 108.0 L461.7 108.7 L461.4 109.4 L461.0 110.2 L460.7 111.1 L460.3 112.0 L459.9 113.0 L459.5 114.2 L459.0 115.4 L458.5 116.7 L458.0 118.0 L457.5 119.4 L457.1 120.9 L456.8 122.3 L456.5 123.8 L456.3 125.3 L456.1 126.8 L456.0 128.4 L455.9 130.0 L455.7 131.6 L455.6 133.3 L455.5 135.0 L455.4 136.7 L455.2 138.5 L455.1 140.2 L455.0 142.0 L454.9 143.9 L454.8 145.8 L454.7 147.9 L454.7 150.0 L454.7 152.2 L454.8 154.6 L454.9 157.0 L455.1 159.5 L455.2 162.1 L455.3 164.7 L455.3 167.3 L455.3 170.0 L455.2 172.7 L455.1 175.3 L454.9 178.0 L454.7 180.8 L454.4 183.6 L454.1 186.5 L453.7 189.4 L453.3 192.5 L452.7 195.9 L452.0 199.7 L451.1 203.7 L450.3 207.7 L449.4 211.5 L448.6 214.9 L448.0 217.8 L447.5 220.0 L447.9 222.0 L448.5 224.6 L449.1 227.8 L449.9 231.3 L450.6 235.0 L451.3 238.8 L452.0 242.6 L452.5 246.3 L452.9 249.9 L453.3 253.7 L453.7 257.6 L454.0 261.5 L454.2 265.4 L454.4 269.2 L454.5 272.9 L454.6 276.5 L454.6 279.9 L454.6 283.2 L454.4 286.4 L454.3 289.6 L454.0 292.7 L453.8 295.7 L453.4 298.6 L453.0 301.5 L452.5 304.4 L451.8 307.5 L451.0 310.5 L450.1 313.5 L449.3 316.2 L448.6 318.7 L448.0 320.7 L447.5 322.3 L448.0 324.5 L448.6 327.4 L449.3 330.8 L450.2 334.7 L451.0 338.7 L451.8 342.9 L452.5 346.9 L453.0 350.7 L453.4 354.3 L453.7 358.0 L453.9 361.7 L454.1 365.4 L454.2 369.1 L454.3 372.8 L454.4 376.4 L454.5 380.0 L454.6 383.2 L454.7 385.9 L454.8 388.4 L454.8 390.9 L454.9 393.8 L454.9 397.3 L455.0 401.6 L455.0 407.0 L455.0 414.2 L455.1 423.2 L455.1 433.3 L455.2 443.8 L455.2 454.2 L455.3 463.7 L455.3 471.6 L455.3 477.3 L537.3 477.5 L537.0 471.7 L536.6 463.6 L536.1 453.9 L535.5 443.4 L534.9 432.6 L534.4 422.4 L533.8 413.2 L533.4 406.0 L533.0 400.6 L532.7 396.5 L532.4 393.3 L532.1 390.7 L531.8 388.4 L531.6 386.1 L531.3 383.4 L531.0 380.0 L530.7 375.9 L530.4 371.5 L530.2 366.8 L529.9 362.1 L529.6 357.3 L529.3 352.8 L528.9 348.7 L528.4 345.0 L527.8 341.7 L527.1 338.7 L526.3 335.9 L525.5 333.3 L524.8 331.0 L524.0 329.0 L523.4 327.4 L523.0 326.0 L523.4 325.2 L523.9 324.2 L524.6 323.1 L525.3 321.8 L526.0 320.2 L526.7 318.2 L527.2 315.9 L527.5 313.0 L527.7 309.5 L527.7 305.5 L527.7 301.0 L527.5 296.2 L527.3 291.1 L527.1 286.0 L526.7 280.9 L526.4 276.0 L526.0 271.0 L525.5 265.6 L525.0 260.2 L524.4 254.7 L523.8 249.4 L523.2 244.4 L522.5 239.9 L521.8 236.0 L521.1 232.7 L520.2 229.9 L519.3 227.5 L518.4 225.5 L517.5 223.8 L516.7 222.3 L516.0 221.1 L515.5 220.0 L515.8 218.6 L516.3 216.7 L516.9 214.5 L517.5 212.1 L518.1 209.5 L518.7 206.9 L519.2 204.3 L519.5 202.0 L519.7 199.8 L519.8 197.8 L519.8 195.7 L519.7 193.6 L519.6 191.6 L519.5 189.4 L519.4 187.3 L519.3 185.0 L519.2 182.7 L519.1 180.2 L519.1 177.8 L519.0 175.3 L518.8 172.7 L518.6 170.2 L518.3 167.6 L518.0 165.0 L517.6 162.3 L517.1 159.6 L516.5 156.8 L515.9 153.9 L515.2 151.2 L514.5 148.5 L513.7 146.0 L513.0 143.7 L512.2 141.6 L511.3 139.7 L510.4 137.9 L509.4 136.2 L508.5 134.6 L507.6 133.2 L506.7 131.8 L506.0 130.5 L505.4 129.4 L504.9 128.4 L504.4 127.5 L504.0 126.8 L503.6 126.1 L503.2 125.3 L502.7 124.6 L502.0 123.7 L501.2 122.7 L500.3 121.7 L499.3 120.7 L498.3 119.6 L497.3 118.5 L496.3 117.5 L495.3 116.5 L494.4 115.5 L493.6 114.6 L492.8 113.6 L492.1 112.7 L491.3 111.8 L490.6 110.9 L489.9 110.1 L489.1 109.4 L488.3 108.7 L487.4 108.1 L486.6 107.6 L485.6 107.1 L484.7 106.7 L483.8 106.3 L482.8 105.9 L481.9 105.6 L481.0 105.3 L480.1 105.0 L479.2 104.7 L478.3 104.5 L477.4 104.3 L476.5 104.1 L475.7 104.0 L474.8 103.9 L474.0 103.8 L473.2 103.8 L472.3 103.9 L471.4 104.0 L470.6 104.1 L469.8 104.3 L469.1 104.4 L468.5 104.5 L468.0 104.6Z" fill="none" stroke="#9fd69a" stroke-width="1" opacity="0.85"/>
 <rect x="469.7" y="469.5" width="50.7" height="26" fill="#d9dddd" opacity="0.55" stroke="#bcc1c1" stroke-width="0.6"/><path d="M480 478 L491.6 488 L503 478" fill="#c9cece" opacity="0.6"/>
 <path d="M467.7 117.5 L465.8 153.6 L465.0 195.0 L460.0 220.0 L465.6 245.0 L468.0 276.5 L466.0 303.6 L461.6 323.0 L466.8 349.8 L469.6 407.0 L469.6 477.3" fill="none" stroke="#2e3133" stroke-width="0.9"/><path d="M467.70 117.50 C469.75 118.00 475.95 118.92 480.00 120.50 C484.05 122.08 488.67 123.75 492.00 127.00 C495.33 130.25 498.17 135.00 500.00 140.00 C501.83 145.00 501.83 146.83 503.00 157.00 C504.17 167.17 506.92 190.50 507.00 201.00 C507.08 211.50 503.08 213.50 503.50 220.00 C503.92 226.50 508.00 230.67 509.50 240.00 C511.00 249.33 512.08 264.33 512.50 276.00 C512.92 287.67 512.67 301.83 512.00 310.00 C511.33 318.17 508.08 319.00 508.50 325.00 C508.92 331.00 512.83 332.33 514.50 346.00 C516.17 359.67 516.92 385.08 518.50 407.00 C520.08 428.92 523.08 465.75 524.00 477.50" fill="none" stroke="#2e3133" stroke-width="0.9"/><path d="M463.0 106.5 L467.7 117.5" fill="none" stroke="#2e3133" stroke-width="0.9"/><path d="M465.8 153.6 L503.0 157.0 L515.0 158.0" fill="none" stroke="#2e3133" stroke-width="0.9"/><path d="M453.3 192.5 L465.0 195.0 L507.0 201.0 L519.5 202.0" fill="none" stroke="#2e3133" stroke-width="0.9"/><path d="M447.5 220.0 L460.0 220.0 L503.5 220.0 L515.5 220.0" fill="none" stroke="#2e3133" stroke-width="0.9"/><path d="M452.5 246.3 L465.6 245.0 L509.5 240.0 L521.8 236.0" fill="none" stroke="#2e3133" stroke-width="0.9"/><path d="M454.6 276.5 L468.0 276.5 L512.5 276.0 L526.4 276.0" fill="none" stroke="#2e3133" stroke-width="0.9"/><path d="M453.0 301.5 L466.0 303.6 L512.0 310.0 L527.5 313.0" fill="none" stroke="#2e3133" stroke-width="0.9"/><path d="M447.5 322.3 L461.6 323.0 L508.5 325.0 L523.0 326.0" fill="none" stroke="#2e3133" stroke-width="0.9"/><path d="M453.0 350.7 L466.8 349.8 L514.5 346.0 L528.4 345.0" fill="none" stroke="#2e3133" stroke-width="0.9"/><path d="M455.0 407.0 L469.6 407.0 L518.5 407.0 L533.4 406.0" fill="none" stroke="#2e3133" stroke-width="0.9"/>
 <path d="M491.6 106 V478" stroke="#3a5a72" stroke-width="0.95"/>
 <path d="M486.2 106 V140" stroke="#6b7072" stroke-width="0.8"/>
 
<defs><linearGradient id="rb" x1="0" x2="1"><stop offset="0" stop-color="#f4f5f4" stop-opacity="0"/><stop offset="0.06" stop-color="#f4f5f4" stop-opacity="0.6"/><stop offset="0.94" stop-color="#f4f5f4" stop-opacity="0.6"/><stop offset="1" stop-color="#f4f5f4" stop-opacity="0"/></linearGradient><linearGradient id="rl" x1="0" x2="1"><stop offset="0" stop-color="#fff" stop-opacity="0"/><stop offset="0.08" stop-color="#fff" stop-opacity="0.95"/><stop offset="0.92" stop-color="#fff" stop-opacity="0.95"/><stop offset="1" stop-color="#fff" stop-opacity="0"/></linearGradient></defs>
<rect x="394" y="143.8" width="186.5" height="17.6" fill="url(#rb)"/>
<rect x="394" y="159.8" width="186.5" height="1.3" fill="url(#rl)"/>
<path d="M399.5 144.3 V149.8 M401.3 144.3 V149.8 M403.2 144.3 V149.8 M405.0 144.3 V149.8 M406.8 144.3 V149.8 M408.6 144.3 V149.8 M410.5 144.3 V149.8 M412.3 144.3 V149.8 M414.1 144.3 V149.8 M416.0 144.3 V149.8 M417.8 144.3 V149.8 M419.6 144.3 V149.8 M421.5 144.3 V149.8 M423.3 144.3 V149.8 M425.1 144.3 V149.8 M426.9 144.3 V149.8 M428.8 144.3 V149.8 M430.6 144.3 V149.8 M432.4 144.3 V149.8 M434.3 144.3 V149.8 M436.1 144.3 V149.8 M437.9 144.3 V149.8 M439.8 144.3 V149.8 M441.6 144.3 V149.8 M443.4 144.3 V149.8 M445.2 144.3 V149.8 M447.1 144.3 V149.8 M448.9 144.3 V149.8 M450.7 144.3 V149.8 M452.6 144.3 V149.8 M454.4 144.3 V149.8 M456.2 144.3 V149.8 M458.1 144.3 V149.8 M459.9 144.3 V149.8 M461.7 144.3 V149.8 M463.5 144.3 V149.8 M465.4 144.3 V149.8 M467.2 144.3 V149.8 M469.0 144.3 V149.8 M470.9 144.3 V149.8 M472.7 144.3 V149.8 M474.5 144.3 V149.8 M496.5 144.3 V149.8 M498.3 144.3 V149.8 M500.1 144.3 V149.8 M502.0 144.3 V149.8 M503.8 144.3 V149.8 M505.6 144.3 V149.8 M507.5 144.3 V149.8 M509.3 144.3 V149.8 M511.1 144.3 V149.8 M513.0 144.3 V149.8 M514.8 144.3 V149.8 M516.6 144.3 V149.8 M518.4 144.3 V149.8 M520.3 144.3 V149.8 M522.1 144.3 V149.8 M523.9 144.3 V149.8 M525.8 144.3 V149.8 M527.6 144.3 V149.8 M529.4 144.3 V149.8 M531.3 144.3 V149.8 M533.1 144.3 V149.8 M534.9 144.3 V149.8 M536.7 144.3 V149.8 M538.6 144.3 V149.8 M540.4 144.3 V149.8 M542.2 144.3 V149.8 M544.1 144.3 V149.8 M545.9 144.3 V149.8 M547.7 144.3 V149.8 M549.6 144.3 V149.8 M551.4 144.3 V149.8 M553.2 144.3 V149.8 M555.0 144.3 V149.8 M556.9 144.3 V149.8 M558.7 144.3 V149.8 M560.5 144.3 V149.8 M562.4 144.3 V149.8 M564.2 144.3 V149.8 M566.0 144.3 V149.8 M567.9 144.3 V149.8 M569.7 144.3 V149.8 M571.5 144.3 V149.8 M573.4 144.3 V149.8 M575.2 144.3 V149.8" stroke="#5c5f61" stroke-width="0.7" opacity="0.8"/>
<path d="M400.1 144.5 V156" stroke="#3a3d3f" stroke-width="0.9"/><path d="M418.4 144.5 V160.5" stroke="#3a3d3f" stroke-width="1.1"/><path d="M436.7 144.5 V156" stroke="#3a3d3f" stroke-width="0.9"/><path d="M455.0 144.5 V160.5" stroke="#3a3d3f" stroke-width="1.1"/><path d="M473.3 144.5 V156" stroke="#3a3d3f" stroke-width="0.9"/><path d="M509.9 144.5 V156" stroke="#3a3d3f" stroke-width="0.9"/><path d="M528.2 144.5 V160.5" stroke="#3a3d3f" stroke-width="1.1"/><path d="M546.5 144.5 V156" stroke="#3a3d3f" stroke-width="0.9"/><path d="M564.8 144.5 V160.5" stroke="#3a3d3f" stroke-width="1.1"/>

 <path d="M482.5 160.5 V143 L486.1 138 L489.7 143 V160.5Z" fill="#fbfbfb" stroke="#333638" stroke-width="0.9"/>
 <circle cx="503" cy="157" r="1.2" fill="#e8eae9" stroke="#6a6d6e" stroke-width="0.4"/><circle cx="515" cy="158" r="1.2" fill="#e8eae9" stroke="#6a6d6e" stroke-width="0.4"/><circle cx="507" cy="201" r="1.2" fill="#e8eae9" stroke="#6a6d6e" stroke-width="0.4"/><circle cx="519.5" cy="202" r="1.2" fill="#e8eae9" stroke="#6a6d6e" stroke-width="0.4"/><circle cx="509.5" cy="240" r="1.2" fill="#e8eae9" stroke="#6a6d6e" stroke-width="0.4"/><circle cx="521.8" cy="236" r="1.2" fill="#e8eae9" stroke="#6a6d6e" stroke-width="0.4"/><circle cx="512.5" cy="276" r="1.2" fill="#e8eae9" stroke="#6a6d6e" stroke-width="0.4"/><circle cx="526.4" cy="276" r="1.2" fill="#e8eae9" stroke="#6a6d6e" stroke-width="0.4"/><circle cx="512" cy="310" r="1.2" fill="#e8eae9" stroke="#6a6d6e" stroke-width="0.4"/><circle cx="527.5" cy="313" r="1.2" fill="#e8eae9" stroke="#6a6d6e" stroke-width="0.4"/><circle cx="508.5" cy="325" r="1.2" fill="#e8eae9" stroke="#6a6d6e" stroke-width="0.4"/><circle cx="523" cy="326" r="1.2" fill="#e8eae9" stroke="#6a6d6e" stroke-width="0.4"/><circle cx="514.5" cy="346" r="1.2" fill="#e8eae9" stroke="#6a6d6e" stroke-width="0.4"/><circle cx="528.4" cy="345" r="1.2" fill="#e8eae9" stroke="#6a6d6e" stroke-width="0.4"/><circle cx="518.5" cy="407" r="1.2" fill="#e8eae9" stroke="#6a6d6e" stroke-width="0.4"/><circle cx="533.4" cy="406" r="1.2" fill="#e8eae9" stroke="#6a6d6e" stroke-width="0.4"/><circle cx="524" cy="477.5" r="1.2" fill="#e8eae9" stroke="#6a6d6e" stroke-width="0.4"/><circle cx="537.3" cy="477.8" r="1.2" fill="#e8eae9" stroke="#6a6d6e" stroke-width="0.4"/>
 <circle cx="463" cy="106.5" r="3.6" fill="#5cc0f0" opacity="0.45"/><circle cx="463" cy="106.5" r="2.9" fill="#1fa3e8"/><circle cx="463" cy="106.5" r="1.5" fill="#1279b8" opacity="0.75"/><circle cx="454.7" cy="150" r="3.6" fill="#5cc0f0" opacity="0.45"/><circle cx="454.7" cy="150" r="2.9" fill="#1fa3e8"/><circle cx="454.7" cy="150" r="1.5" fill="#1279b8" opacity="0.75"/><circle cx="453.3" cy="192.5" r="3.6" fill="#5cc0f0" opacity="0.45"/><circle cx="453.3" cy="192.5" r="2.9" fill="#1fa3e8"/><circle cx="453.3" cy="192.5" r="1.5" fill="#1279b8" opacity="0.75"/><circle cx="447.5" cy="220" r="3.6" fill="#5cc0f0" opacity="0.45"/><circle cx="447.5" cy="220" r="2.9" fill="#1fa3e8"/><circle cx="447.5" cy="220" r="1.5" fill="#1279b8" opacity="0.75"/><circle cx="452.5" cy="246.3" r="3.6" fill="#5cc0f0" opacity="0.45"/><circle cx="452.5" cy="246.3" r="2.9" fill="#1fa3e8"/><circle cx="452.5" cy="246.3" r="1.5" fill="#1279b8" opacity="0.75"/><circle cx="454.6" cy="276.5" r="3.6" fill="#5cc0f0" opacity="0.45"/><circle cx="454.6" cy="276.5" r="2.9" fill="#1fa3e8"/><circle cx="454.6" cy="276.5" r="1.5" fill="#1279b8" opacity="0.75"/><circle cx="453" cy="301.5" r="3.6" fill="#5cc0f0" opacity="0.45"/><circle cx="453" cy="301.5" r="2.9" fill="#1fa3e8"/><circle cx="453" cy="301.5" r="1.5" fill="#1279b8" opacity="0.75"/><circle cx="447.5" cy="322.3" r="3.6" fill="#5cc0f0" opacity="0.45"/><circle cx="447.5" cy="322.3" r="2.9" fill="#1fa3e8"/><circle cx="447.5" cy="322.3" r="1.5" fill="#1279b8" opacity="0.75"/><circle cx="453" cy="350.7" r="3.6" fill="#5cc0f0" opacity="0.45"/><circle cx="453" cy="350.7" r="2.9" fill="#1fa3e8"/><circle cx="453" cy="350.7" r="1.5" fill="#1279b8" opacity="0.75"/><circle cx="455" cy="407" r="3.6" fill="#5cc0f0" opacity="0.45"/><circle cx="455" cy="407" r="2.9" fill="#1fa3e8"/><circle cx="455" cy="407" r="1.5" fill="#1279b8" opacity="0.75"/><circle cx="455.3" cy="477.3" r="3.6" fill="#5cc0f0" opacity="0.45"/><circle cx="455.3" cy="477.3" r="2.9" fill="#1fa3e8"/><circle cx="455.3" cy="477.3" r="1.5" fill="#1279b8" opacity="0.75"/><circle cx="467.7" cy="117.5" r="3.6" fill="#5cc0f0" opacity="0.45"/><circle cx="467.7" cy="117.5" r="2.9" fill="#1fa3e8"/><circle cx="467.7" cy="117.5" r="1.5" fill="#1279b8" opacity="0.75"/><circle cx="465.8" cy="153.6" r="3.6" fill="#5cc0f0" opacity="0.45"/><circle cx="465.8" cy="153.6" r="2.9" fill="#1fa3e8"/><circle cx="465.8" cy="153.6" r="1.5" fill="#1279b8" opacity="0.75"/><circle cx="465" cy="195" r="3.6" fill="#5cc0f0" opacity="0.45"/><circle cx="465" cy="195" r="2.9" fill="#1fa3e8"/><circle cx="465" cy="195" r="1.5" fill="#1279b8" opacity="0.75"/><circle cx="460" cy="220" r="3.6" fill="#5cc0f0" opacity="0.45"/><circle cx="460" cy="220" r="2.9" fill="#1fa3e8"/><circle cx="460" cy="220" r="1.5" fill="#1279b8" opacity="0.75"/><circle cx="465.6" cy="245" r="3.6" fill="#5cc0f0" opacity="0.45"/><circle cx="465.6" cy="245" r="2.9" fill="#1fa3e8"/><circle cx="465.6" cy="245" r="1.5" fill="#1279b8" opacity="0.75"/><circle cx="468" cy="276.5" r="3.6" fill="#5cc0f0" opacity="0.45"/><circle cx="468" cy="276.5" r="2.9" fill="#1fa3e8"/><circle cx="468" cy="276.5" r="1.5" fill="#1279b8" opacity="0.75"/><circle cx="466" cy="303.6" r="3.6" fill="#5cc0f0" opacity="0.45"/><circle cx="466" cy="303.6" r="2.9" fill="#1fa3e8"/><circle cx="466" cy="303.6" r="1.5" fill="#1279b8" opacity="0.75"/><circle cx="461.6" cy="323" r="3.6" fill="#5cc0f0" opacity="0.45"/><circle cx="461.6" cy="323" r="2.9" fill="#1fa3e8"/><circle cx="461.6" cy="323" r="1.5" fill="#1279b8" opacity="0.75"/><circle cx="466.8" cy="349.8" r="3.6" fill="#5cc0f0" opacity="0.45"/><circle cx="466.8" cy="349.8" r="2.9" fill="#1fa3e8"/><circle cx="466.8" cy="349.8" r="1.5" fill="#1279b8" opacity="0.75"/><circle cx="469.6" cy="407" r="3.6" fill="#5cc0f0" opacity="0.45"/><circle cx="469.6" cy="407" r="2.9" fill="#1fa3e8"/><circle cx="469.6" cy="407" r="1.5" fill="#1279b8" opacity="0.75"/><circle cx="469.6" cy="477.3" r="3.6" fill="#5cc0f0" opacity="0.45"/><circle cx="469.6" cy="477.3" r="2.9" fill="#1fa3e8"/><circle cx="469.6" cy="477.3" r="1.5" fill="#1279b8" opacity="0.75"/>
 
<g font-family="Liberation Sans" font-weight="bold" fill="#26282a">
 <text transform="translate(422.6 186.2) rotate(-90)" font-size="13.4">20</text>
 <text transform="translate(459.1 186.2) rotate(-90)" font-size="13.4">10</text>
 <text transform="translate(532 186.2) rotate(-90)" font-size="13.4">10</text>
 <text transform="translate(568 186.2) rotate(-90)" font-size="13.4">20</text>
 <text transform="translate(491.4 207.8) rotate(-90)" font-size="14.6" fill="#1c1e20">1.464</text>
</g>
 <!-- top circles + handle -->
 <circle cx="486.2" cy="101.8" r="4.6" fill="#eef0ef" stroke="#3b3e40" stroke-width="0.9"/>
 <circle cx="492" cy="101.8" r="4.6" fill="#f5f6f5" stroke="#3b3e40" stroke-width="0.9"/>
 <defs><linearGradient id="hl" x1="0" x2="1"><stop offset="0" stop-color="#3d4042" stop-opacity="0.25"/><stop offset="1" stop-color="#3d4042"/></linearGradient></defs><path d="M499 101 H518 V103 H499Z" fill="url(#hl)"/>
 <path d="M517 99.5 L521 102 L517 104.5Z" fill="#3d4042"/>
 <circle cx="531" cy="102" r="2.2" fill="none" stroke="#c8cac8" stroke-width="0.8"/>
 <path d="M520.5 101 L520.5 110.5 L523 108.3 L525 112 L526.3 111.3 L524.3 107.8 L527.5 107.5Z" fill="#f8f8f8" stroke="#3a3a3a" stroke-width="0.6"/>
 <!-- bottom -->
 
 <path d="M491.6 478 V496" stroke="#9aa0a2" stroke-width="0.6"/>
 <path d="M492.3 457 L497 457 L494.6 448.5Z" fill="#3f6f90"/>
 <path d="M455.3 477.6 H537.3" stroke="#8a7ad6" stroke-width="1.4"/>
 <circle cx="455.3" cy="477.3" r="3.6" fill="#5cc0f0" opacity="0.45"/><circle cx="455.3" cy="477.3" r="2.9" fill="#1fa3e8"/><circle cx="455.3" cy="477.3" r="1.5" fill="#1279b8" opacity="0.75"/><circle cx="469.6" cy="477.3" r="3.6" fill="#5cc0f0" opacity="0.45"/><circle cx="469.6" cy="477.3" r="2.9" fill="#1fa3e8"/><circle cx="469.6" cy="477.3" r="1.5" fill="#1279b8" opacity="0.75"/>
 
 <circle cx="491.7" cy="477.5" r="4.6" fill="#fbfbfb" stroke="#3b3e40" stroke-width="1.1"/>
</svg>
<!--/MODEL-->

<!-- viewport toolbar -->
<svg class="a" style="left:505px;top:65px" width="175" height="22" viewBox="505 65 175 22">
 <defs>
  <radialGradient id="tsph" cx="55%" cy="35%" r="65%"><stop offset="0" stop-color="#9fdcdc"/><stop offset="0.6" stop-color="#4aa3aa"/><stop offset="1" stop-color="#24646e"/></radialGradient>
  <radialGradient id="gsph" cx="35%" cy="35%" r="65%"><stop offset="0" stop-color="#e2e4e4"/><stop offset="1" stop-color="#8a8e90"/></radialGradient>
  <radialGradient id="bsph" cx="40%" cy="35%" r="65%"><stop offset="0" stop-color="#4aa6bd"/><stop offset="1" stop-color="#1a5f78"/></radialGradient>
 </defs>
 <!-- book -->
 <path d="M510.8 80.3 V73.2 C510.8 71 515.5 70.8 515.6 72.6 C515.7 70.8 520.4 71 520.4 73.2 V80.3Z" fill="#d8eee8" stroke="#656d6d" stroke-width="1.1" stroke-linejoin="round"/>
 <path d="M515.6 72.8 V80.2" stroke="#3f6a64" stroke-width="1.1" stroke-dasharray="1.2 0.8"/>
 <!-- spheres -->
 <circle cx="536.4" cy="77.4" r="3.8" fill="url(#gsph)"/>
 <circle cx="533.4" cy="74.4" r="3.4" fill="url(#tsph)"/>
 <circle cx="552" cy="75.7" r="4.8" fill="url(#bsph)"/>
 <path d="M552 71 V80.5 M547.5 75.7 H556.5" stroke="#2e7f94" stroke-width="0.5" opacity="0.7"/>
 <path d="M561.8 74.5 H566 L563.9 77.2Z" fill="#2b2e30"/>
 <!-- frame icon -->
 <path d="M577 71.5 V80.5 M576 79.5 H585.5" stroke="#2f3e44" stroke-width="1.2"/>
 <circle cx="581.5" cy="75.5" r="3.3" fill="#4f9db4" stroke="#2a5e70" stroke-width="0.7"/>
 <path d="M578.5 72 H584.5 V78" fill="none" stroke="#2f3e44" stroke-width="0.8"/>
 <!-- square w gear -->
 <rect x="596" y="71" width="9.3" height="9.3" fill="#dfe2e2" stroke="#8e9394" stroke-width="0.8"/>
 <path d="M598 74 C598 78 602 78.5 603.5 75.5" fill="none" stroke="#2e3a40" stroke-width="1.4"/>
 <circle cx="600" cy="74" r="1.6" fill="#3b7f98"/>
 <!-- cube w magnifier -->
 <path d="M615.8 72.5 L620.5 71 L624 72.5 L624 79 L619.5 80.5 L615.8 79Z" fill="#3e8aa6" stroke="#2a4f5e" stroke-width="0.6"/>
 <circle cx="622.8" cy="78.3" r="2" fill="#d6dadb" stroke="#2e3a40" stroke-width="0.7"/>
 <!-- cube -->
 <path d="M633.5 73 L638 71.5 L642.5 73 L642.5 79.5 L638 81 L633.5 79.5Z" fill="#2f8fb0" stroke="#27485a" stroke-width="0.7"/>
 <path d="M633.5 73 L638 74.5 L642.5 73 M638 74.5 V81" fill="none" stroke="#bfe3ee" stroke-width="0.7"/>
 <path d="M633.9 73.5 L637.6 74.8 V80.4 L633.9 79.2Z" fill="#d9eef4"/>
 <path d="M647.2 74.5 H651.4 L649.3 77.2Z" fill="#2b2e30"/>
 <path d="M656.3 67.5 V84" stroke="#5a5e60" stroke-width="0.8"/>
 <!-- check icon -->
 <path d="M660 68.5 L669 69.8 L668.5 77.5 L661 76.8Z" fill="#4d565c"/>
 <path d="M662 70.6 L667.2 71.4 L666.8 75.6 L662.4 75.1Z" fill="#6f8597"/>
 <path d="M665.2 79 L668.3 81.8 L674.2 76" fill="none" stroke="#ffffff" stroke-width="3" opacity="0.6"/>
 <path d="M665.2 79 L668.3 81.8 L674.2 76" fill="none" stroke="#3b9a3b" stroke-width="2.1"/>
</svg>
<!-- compass -->
<svg class="a" style="left:900px;top:75px" width="115" height="105" viewBox="900 75 115 105">
 <path d="M935.5 84 C931 84.2 928.2 86.5 927.6 90.5" fill="none" stroke="#55595b" stroke-width="2.8"/>
 <path d="M923.2 89 L927 96.5 L932 90Z" fill="#55595b"/>
 <path d="M997 84.5 C1001.5 84.7 1004.3 87 1004.9 91" fill="none" stroke="#55595b" stroke-width="2.8"/>
 <path d="M1000.5 90.5 L1005.5 97 L1009.3 89.5Z" fill="#55595b"/>
 <path d="M911 111.5 L908.3 114.5 L911 117.5" fill="none" stroke="#505456" stroke-width="1.1"/>
 <rect x="952" y="101" width="36" height="38" fill="#e5e7e5" stroke="#d9dcda" stroke-width="0.5"/>
 <path d="M950.8 102.5 V138" stroke="#3b8fbf" stroke-width="1.3"/>
 <path d="M952 138.8 H988" stroke="#e04848" stroke-width="1.5"/>
 <text x="946.5" y="97.5" font-size="10" font-weight="bold" fill="#3b8fbf" font-family="Liberation Sans">Z</text>
 <text x="991" y="143" font-size="10" font-weight="bold" fill="#e0485a" font-family="Liberation Sans">X</text>
 <path d="M958 116.7 H975.5" stroke="#4a5052" stroke-width="1.5"/>
 <path d="M961 139 V124.3 H977.5 V139" fill="none" stroke="#4a5052" stroke-width="1.5"/>
 <path d="M958 107 L961 124" stroke="#8a8f91" stroke-width="0.8"/>
 <rect x="956" y="163.7" width="37.5" height="12.2" rx="1.5" fill="#eceeec" stroke="#c3c6c4" stroke-width="0.7"/>
 <text x="959.5" y="172.3" font-size="6.2" fill="#4a4d4f" font-family="Liberation Sans">mm</text>
 <path d="M985.3 168 H990.3 L987.8 171.5Z" fill="#2b2e30"/>
</svg>

<!-- bottom toolbar -->
<div class="a" style="left:333.5px;top:543.5px;width:356.5px;height:25px;background:#eef0ef;border:0.8px solid #c9cccb;border-bottom:none"></div>
<div class="a" style="left:364.7px;top:532px;border-left:0.8px solid #bcbfbe;width:38.69999999999999px;height:11.5px;background:#cfd2d1;border-top:0.8px solid #bcbfbe;border-right:0.8px solid #bcbfbe;border-bottom:0.8px solid #bcbfbe;font-size:6.3px;color:#585b5d;text-align:center;line-height:10.5px;white-space:nowrap">Essentials</div>
<div class="a" style="left:403.4px;top:532px;width:28.5px;height:11.5px;background:#cfd2d1;border-top:0.8px solid #bcbfbe;border-right:0.8px solid #bcbfbe;border-bottom:0.8px solid #bcbfbe;font-size:6.3px;color:#585b5d;text-align:center;line-height:10.5px;white-space:nowrap">Sketch</div>
<div class="a" style="left:431.9px;top:532px;width:41.400000000000034px;height:12px;background:#f2f4f3;border-top:0.8px solid #bcbfbe;border-right:0.8px solid #bcbfbe;font-size:6.3px;color:#4a4c4e;text-align:center;line-height:10.5px;white-space:nowrap">Subdivision</div>
<div class="a" style="left:473.3px;top:532px;width:35.099999999999966px;height:11.5px;background:#cfd2d1;border-top:0.8px solid #bcbfbe;border-right:0.8px solid #bcbfbe;border-bottom:0.8px solid #bcbfbe;font-size:6.3px;color:#585b5d;text-align:center;line-height:10.5px;white-space:nowrap">Features</div>
<div class="a" style="left:508.4px;top:532px;width:36.30000000000007px;height:11.5px;background:#cfd2d1;border-top:0.8px solid #bcbfbe;border-right:0.8px solid #bcbfbe;border-bottom:0.8px solid #bcbfbe;font-size:6.3px;color:#585b5d;text-align:center;line-height:10.5px;white-space:nowrap">Assembly</div>
<div class="a" style="left:544.7px;top:532px;width:23.699999999999932px;height:11.5px;background:#cfd2d1;border-top:0.8px solid #bcbfbe;border-right:0.8px solid #bcbfbe;border-bottom:0.8px solid #bcbfbe;font-size:6.3px;color:#585b5d;text-align:center;line-height:10.5px;white-space:nowrap">Tools</div>
<div class="a" style="left:568.4px;top:532px;width:34.10000000000002px;height:11.5px;background:#cfd2d1;border-top:0.8px solid #bcbfbe;border-right:0.8px solid #bcbfbe;border-bottom:0.8px solid #bcbfbe;font-size:6.3px;color:#585b5d;text-align:center;line-height:10.5px;white-space:nowrap">Lifecycle</div>
<div class="a" style="left:602.5px;top:532px;width:43.89999999999998px;height:11.5px;background:#cfd2d1;border-top:0.8px solid #bcbfbe;border-right:0.8px solid #bcbfbe;border-bottom:0.8px solid #bcbfbe;font-size:6.3px;color:#585b5d;text-align:center;line-height:10.5px;white-space:nowrap">Marketplace</div>
<div class="a" style="left:646.4px;top:532px;width:23.0px;height:11.5px;background:#cfd2d1;border-top:0.8px solid #bcbfbe;border-right:0.8px solid #bcbfbe;border-bottom:0.8px solid #bcbfbe;font-size:6.3px;color:#585b5d;text-align:center;line-height:10.5px;white-space:nowrap">View</div>

<svg class="a" style="left:333px;top:543px" width="358" height="26" viewBox="333 543 358 26">
 <path d="M336 547 L338.5 549.5 L341 547" fill="none" stroke="#55595b" stroke-width="0.9"/>
 <path d="M343.2 544 V568" stroke="#c9cccb" stroke-width="0.8"/>
 <g stroke="#d4d7d6" stroke-width="0.8"><path d="M368.6 547 V566 M399.4 547 V566 M430.7 547 V566"/></g>
 <!-- grid w dot -->
 <g stroke="#8a8f91" stroke-width="0.6" fill="none"><path d="M352 549.5 H363.5 M351 552.5 H363.5 M351 555.5 H363.5 M351 558.5 H363.5 M351 561.5 H363.5 M353 549 V564 M356 549 V564 M359 549 V564 M362 549 V564"/></g>
 <path d="M349.5 551 V559.5 C349.5 562.5 351 564 354 564 H363.7" fill="none" stroke="#3f8a95" stroke-width="1.2"/>
 <circle cx="350.6" cy="550.8" r="1.9" fill="#1f5f6e"/>
 <!-- cube -->
 <path d="M373.5 553 L380.5 549.3 L387.8 553 L387.5 560.5 L380.5 564.3 L373.5 560.5Z" fill="#e3e6e5" stroke="#5d6264" stroke-width="0.9"/>
 <g stroke="#6d7274" stroke-width="0.6" fill="none"><path d="M373.5 553 L380.5 556.7 L387.8 553 M380.5 556.7 V564.3 M376 551.7 L383 555.4 M378.3 550.5 L385.3 554.2 M376 554.5 V562 M378.2 555.6 V563 M373.5 556 L380.5 559.7 L387.8 556 M373.5 558.3 L380.5 562 L387.8 558.3"/></g>
 <circle cx="393.3" cy="557" r="1" fill="#2b2e30"/>
 <!-- grid square -->
 <path d="M406 550.5 L418 549.2 L418 562.5 L406 564Z" fill="#eef0ef" stroke="#64696b" stroke-width="0.9"/>
 <g stroke="#64696b" stroke-width="0.7"><path d="M410 550.1 V563.5 M414 549.7 V563 M406 555 L418 553.8 M406 559.5 L418 558.2"/></g>
 <circle cx="424" cy="557" r="1" fill="#2b2e30"/>
 <!-- push -->
 <path d="M436 561 L442 556.5 L451 561 L444.5 564.5Z" fill="#9aa0a2" stroke="#5b6062" stroke-width="0.7"/>
 <path d="M439 560 C441 558.5 442 556 443 553 C444 556 445.5 558.5 448 560 C446 561.5 441.5 561.5 439 560Z" fill="#3f9ac0"/>
 <path d="M443 553.5 V550.5" stroke="#2b2e30" stroke-width="0.9"/><path d="M441.5 551.3 L443 549.3 L444.5 551.3Z" fill="#2b2e30"/>
 <!-- curved grid -->
 <path d="M458.5 549.5 C463 549 466 549.3 467 549.8 C470.5 552.5 471 560 467.5 564 C465 564.4 462 564.4 459.5 564.2 C461.8 559.5 461.8 554 458.5 549.5Z" fill="#eef3f3" stroke="#5d6567" stroke-width="0.9"/>
 <g stroke="#6a9296" stroke-width="0.6" fill="none"><path d="M461.5 549.4 C464.8 554 464.8 559.5 462.5 564.3 M464.3 549.4 C467.8 554 467.8 559.5 465.3 564.3 M460.8 554 C464 553.5 467 553.3 469.3 553.5 M461.5 558.8 C464.5 558.5 467.5 558.5 470 558.8"/></g>
 <!-- frame -->
 <path d="M479 551 L491 549 L491 563 L479 564.5Z" fill="#b9dcdc" stroke="#4f6a6e" stroke-width="0.8"/>
 <path d="M481.5 553 L488.5 552 L488.5 561 L481.5 562Z" fill="#e7f3f3" stroke="#4f8a92" stroke-width="0.7"/>
 <path d="M483.5 555 L486.5 554.6 L486.5 559 L483.5 559.4Z" fill="#b9dcdc" stroke="#4f8a92" stroke-width="0.5"/>
 <!-- fold -->
 <path d="M499.8 551 L507 549.3 L512.8 556.5 L505.5 558.5Z" fill="#e8f4f4" stroke="#5d6567" stroke-width="0.8"/>
 <path d="M505.5 558.5 L512.8 556.5 L507.5 564 L500.5 564.5Z" fill="#a4a9ab" stroke="#5d6567" stroke-width="0.8"/>
 <!-- bracket -->
 <g fill="none" stroke="#3a3e40" stroke-width="0.9"><path d="M521.5 550 H534.5 V563.5 H521.5 M521.5 550 L527 557 L521.5 563.5 M527 557 H534.5"/></g>
 <g fill="#fafafa" stroke="#3a3e40" stroke-width="0.6"><circle cx="521.5" cy="550" r="1.3"/><circle cx="527" cy="557" r="1.3"/><circle cx="521.5" cy="563.5" r="1.3"/></g>
 <!-- blue surface -->
 <path d="M542.5 551.5 C547 552 552 550 556.8 549.5 C555 554 555 558.5 556 562.5 C551 563.5 547 564.5 543.5 564.5 C544.5 560 544.5 556 542.5 551.5Z" fill="#2f8cc0" stroke="#4d5a60" stroke-width="0.8"/>
 <path d="M543.5 552 C545.5 555.5 545.5 560 544.5 563.8" fill="none" stroke="#d5e9f0" stroke-width="1.2"/>
 <!-- cylinder -->
 <path d="M567 550 L576 552 L576 564 L567 561Z" fill="#67a6ad" stroke="#46676b" stroke-width="0.7"/>
 <path d="M563.5 554 C563.5 552.5 565 551.8 568 551.8 C572 551.8 573.5 552.5 573.5 554 V561.5 C573.5 563 572 563.8 568 563.8 C565 563.8 563.5 563 563.5 561.5Z" fill="#dfe3e3" stroke="#5a6062" stroke-width="0.8"/>
 <path d="M576 553.5 C578.5 554 578.5 561 576 561.5" fill="#9aa0a2" stroke="#5a6062" stroke-width="0.6"/>
 <!-- cube x -->
 <path d="M585 553 L590.5 549.5 L598.5 551.5 L598.5 561 L592.5 564.5 L585 562Z" fill="#dfe3e3" stroke="#5a6062" stroke-width="0.8"/>
 <path d="M590 554.5 L598.5 551.5 L598.5 561 L592.5 564.5 L590 563.5Z" fill="#3f93c3"/>
 <path d="M594.5 559.5 L599 564 M599 559.5 L594.5 564" stroke="#d63535" stroke-width="1.6"/>
 <!-- curve -->
 <g fill="none" stroke="#5d6264" stroke-width="1"><path d="M607.5 552 C612 553.5 615 557 615.5 564 M609 550 C614 551.5 618 555 618.5 564"/></g>
 <path d="M614 549 C616 548 618.5 548.5 618.8 550 L618.5 564 L615.5 564 C615.5 558 614 552 609 550" fill="#e3e6e5" stroke="#8a8f91" stroke-width="0.6"/>
 <!-- sphere -->
 <circle cx="634.5" cy="556.5" r="7.5" fill="#cfd3d3" stroke="#4a4f51" stroke-width="1"/>
 <path d="M628.5 561 C632 557 636 553 640 551" stroke="#2b2e30" stroke-width="1.3"/>
 <path d="M629 554 C631 550.5 636 549.5 638.5 551" fill="none" stroke="#f3f5f4" stroke-width="1.2"/>
 <!-- flex selected -->
 <rect x="646" y="546.5" width="19.6" height="19" rx="1.5" fill="#e4efee" stroke="#7fb5b5" stroke-width="0.9"/>
 <path d="M649 563 C649 558 652 552 655 549.5 L662.5 549 C661 553 658.5 560 656.5 563Z" fill="#d6dcdc" stroke="#5d6567" stroke-width="0.7"/>
 <path d="M653.5 562 L662.3 549" stroke="#2b2e30" stroke-width="1.3"/>
 <!-- last selected -->
 <rect x="667.3" y="546.5" width="19.6" height="19" rx="1.5" fill="#e4efee" stroke="#7fb5b5" stroke-width="0.9"/>
 <path d="M669.5 550 C673 551 681 551 684.5 550 C684 553 682.5 555 681.5 556 C683 557.5 683.5 560 683 562 C680 561.5 674 561.5 671 562 C670.5 560 671 557.5 672.5 556 C671.5 555 670 553 669.5 550Z" fill="#dfe5e5" stroke="#5a6062" stroke-width="0.8"/>
 <path d="M677 548.5 V564" stroke="#5a6062" stroke-width="0.8" stroke-dasharray="1.5 1"/>
</svg>
<!-- tab bar -->
<svg class="a" style="left:6px;top:27px" width="12" height="11" viewBox="0 0 12 11"><g stroke="#6f7172" stroke-width="1.4"><path d="M1 1.5 H7.5 M1 5.5 H8 M1 9.5 H7.5"/></g><path d="M8 2.5 L11 5.5 L8 8.5Z" fill="#6f7172"/></svg>
<div class="tab" style="left:82px">Public</div>
<div class="tab" style="left:126px">SOLIDWORKS</div>
<div class="tab" style="left:197px">ENOVIA</div>
<div class="tab" style="left:245px;color:#57595b">Design</div>
<svg class="a" style="left:276px;top:29px" width="8" height="6" viewBox="0 0 8 6"><path d="M1.5 1.5 L4 4 L6.5 1.5" fill="none" stroke="#7a7c7e" stroke-width="1.1"/></svg>
<div class="a" style="left:238px;top:41.2px;width:54px;height:2px;background:#416f84"></div>
<div class="tab" style="left:305px">Data</div>
<div class="tab" style="left:348px">My Content</div>
<div class="tab" style="left:407.5px">Projects</div>
<div class="tab" style="left:454.5px">Tasks</div>
<div class="tab" style="left:498px">xGenerative Design</div>
<div class="tab" style="left:584px">Groups</div>
<div class="tab" style="left:628.5px">Relational Explorer</div>
<div class="tab" style="left:712px">Engr Release</div>
<div class="tab" style="left:777px">SWUG</div>
<div class="tab" style="left:821.5px">Feeds</div>
<svg class="a" style="left:855px;top:27px" width="11" height="11" viewBox="0 0 11 11"><path d="M5.5 1 V10 M1 5.5 H10" stroke="#3f4143" stroke-width="1.4"/></svg>

</body></html>
